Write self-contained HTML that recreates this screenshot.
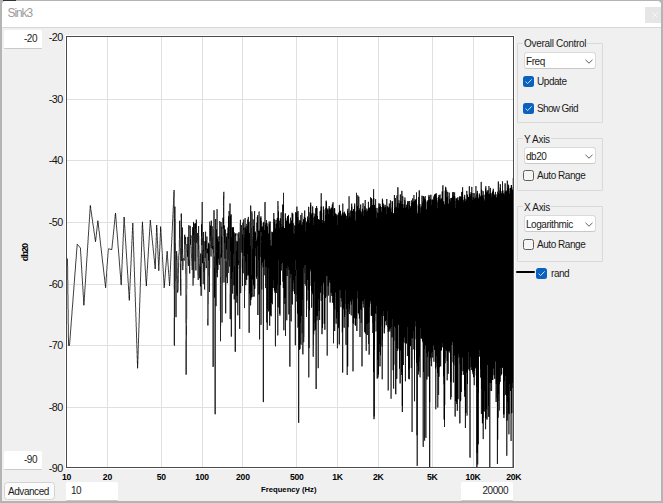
<!DOCTYPE html>
<html><head><meta charset="utf-8">
<style>
*{margin:0;padding:0;box-sizing:border-box}
html,body{width:663px;height:503px;overflow:hidden;background:#b4b4b4;font-family:"Liberation Sans",sans-serif}
.a{position:absolute;white-space:nowrap}
#win{position:absolute;left:2px;top:1px;width:659px;height:500px;background:#f0f0f0;border-radius:4px 4px 0 0;overflow:hidden}
#title{position:absolute;left:0;top:0;width:659px;height:27px;background:#fff;border-bottom:1px solid #d6d6d6}
.inp{position:absolute;background:#fff;border-bottom:1px solid #c9c9c9;border-radius:2px 2px 1px 1px}
.t{position:absolute;white-space:nowrap;font-size:10px;line-height:11px;color:#1b1b1b;letter-spacing:-0.45px}
.yl{position:absolute;white-space:nowrap;font-size:10.8px;line-height:12px;color:#111;text-align:right;width:30px;letter-spacing:-0.5px}
.xl{position:absolute;white-space:nowrap;font-size:8.6px;font-weight:bold;line-height:10px;color:#000;text-align:center;width:40px;letter-spacing:-0.25px}
.grp{position:absolute;border:1px solid #d9d9d9;border-radius:1px}
.gt{position:absolute;white-space:nowrap;font-size:10px;line-height:11px;color:#1b1b1b;background:#f0f0f0;padding:0 1px;letter-spacing:-0.3px}
.combo{position:absolute;background:#fff;border:1px solid #dadada;border-bottom-color:#c8c8c8;border-radius:3px}
.cb{position:absolute;width:11px;height:11px;border-radius:2.5px}
.cb.on{background:#0a62c0}
.cb.off{background:#f6f6f6;border:1px solid #5e5e5e}
</style></head><body>
<div class="a" style="left:3px;top:0;width:13px;height:1px;background:#333"></div>
<div id="win">
 <div id="title"><div class="t" style="left:5.5px;top:5px;font-size:11.9px;line-height:14px;letter-spacing:-1.05px;color:#9c9c9c">Sink3</div><div class="a" style="left:643px;top:6px;width:16px;height:16px;background:#e6e6e6"></div><svg class="a" style="left:650px;top:11px" width="6" height="6" viewBox="0 0 6 6"><path d="M0.5 0.5L5.5 5.5M5.5 0.5L0.5 5.5" stroke="#f4f4f4" stroke-width="1"/></svg></div>
</div>
<!-- left inputs -->
<div class="inp" style="left:4px;top:30px;width:38px;height:19px"></div>
<div class="t" style="left:7px;top:33px;width:30px;text-align:right">-20</div>
<div class="inp" style="left:4px;top:451px;width:38px;height:19px"></div>
<div class="t" style="left:7px;top:454px;width:30px;text-align:right">-90</div>
<div class="a" style="left:13.5px;top:246.5px;width:22px;height:11px;font-size:9px;font-weight:bold;line-height:11px;transform:rotate(-90deg);text-align:center;color:#000;letter-spacing:-0.9px">db20</div>
<!-- y labels -->
<div class="yl" style="left:32.8px;top:31.2px">-20</div>
<div class="yl" style="left:32.8px;top:92.8px">-30</div>
<div class="yl" style="left:32.8px;top:154.4px">-40</div>
<div class="yl" style="left:32.8px;top:216.0px">-50</div>
<div class="yl" style="left:32.8px;top:277.6px">-60</div>
<div class="yl" style="left:32.8px;top:339.2px">-70</div>
<div class="yl" style="left:32.8px;top:400.8px">-80</div>
<div class="yl" style="left:32.8px;top:462.4px">-90</div>
<!-- plot -->
<svg class="a" style="left:0;top:0" width="663" height="503" viewBox="0 0 663 503" shape-rendering="crispEdges">
 <rect x="65" y="35" width="450" height="434" fill="#fff"/>
 <path fill="#e0e0e0" d="M107 37h1v430h-1zM161 37h1v430h-1zM202 37h1v430h-1zM242 37h1v430h-1zM296 37h1v430h-1zM337 37h1v430h-1zM378 37h1v430h-1zM432 37h1v430h-1zM473 37h1v430h-1zM67 99h446v1h-446zM67 160h446v1h-446zM67 222h446v1h-446zM67 284h446v1h-446zM67 345h446v1h-446zM67 407h446v1h-446z"/>
<path fill="#dfdfdf" d="M67 324h1v14h-1zM68 266h1v14h-1zM69 333h1v3h-1zM70 320h1v2h-1zM70 342h1v2h-1zM71 307h1v2h-1zM71 329h1v2h-1zM72 294h1v2h-1zM72 316h1v2h-1zM73 281h1v2h-1zM73 303h1v2h-1zM74 268h1v2h-1zM74 290h1v2h-1zM75 254h1v3h-1zM75 276h1v3h-1zM76 263h1v2h-1zM77 250h1v2h-1zM80 262h1v3h-1zM81 251h1v3h-1zM81 278h1v3h-1zM82 267h1v3h-1zM82 295h1v2h-1zM83 284h1v2h-1zM84 282h1v2h-1zM84 305h1v1h-1zM85 266h1v3h-1zM85 292h1v3h-1zM86 250h1v3h-1zM86 276h1v3h-1zM87 235h1v2h-1zM87 261h1v2h-1zM88 219h1v3h-1zM88 245h1v3h-1zM89 205h1v1h-1zM89 230h1v2h-1zM90 214h1v3h-1zM91 207h1v2h-1zM91 219h1v1h-1zM92 214h1v2h-1zM92 226h1v1h-1zM93 221h1v2h-1zM93 233h1v1h-1zM94 228h1v1h-1zM94 240h1v1h-1zM95 234h1v1h-1zM96 225h1v1h-1zM96 240h1v1h-1zM97 231h1v1h-1zM98 220h1v1h-1zM98 232h1v2h-1zM99 227h1v1h-1zM99 241h1v2h-1zM100 235h1v2h-1zM100 250h1v1h-1zM101 244h1v2h-1zM101 259h1v1h-1zM102 253h1v1h-1zM102 267h1v2h-1zM103 262h1v1h-1zM103 276h1v1h-1zM104 270h1v2h-1zM104 285h1v1h-1zM105 276h1v2h-1zM106 262h1v2h-1zM106 286h1v2h-1zM107 249h1v1h-1zM107 271h1v3h-1zM108 257h1v2h-1zM110 248h1v1h-1zM111 243h1v2h-1zM112 234h1v1h-1zM112 249h1v1h-1zM113 224h1v1h-1zM113 240h1v2h-1zM114 214h1v1h-1zM114 230h1v2h-1zM115 223h1v2h-1zM116 214h1v2h-1zM116 235h1v2h-1zM117 227h1v2h-1zM117 248h1v2h-1zM118 239h1v2h-1zM118 260h1v3h-1zM119 252h1v2h-1zM119 273h1v2h-1zM120 265h1v2h-1zM121 257h1v3h-1zM121 285h1v1h-1zM122 233h1v4h-1zM122 272h1v4h-1zM123 249h1v4h-1zM124 235h1v3h-1zM125 225h1v2h-1zM125 251h1v3h-1zM126 241h1v2h-1zM126 267h1v3h-1zM127 257h1v2h-1zM127 283h1v3h-1zM128 273h1v2h-1zM128 300h1v1h-1zM129 276h1v3h-1zM130 253h1v4h-1zM130 290h1v4h-1zM131 231h1v4h-1zM131 268h1v4h-1zM132 222h1v1h-1zM132 246h1v4h-1zM133 267h1v5h-1zM134 247h1v5h-1zM134 297h1v5h-1zM135 277h1v5h-1zM135 327h1v5h-1zM136 307h1v5h-1zM136 358h1v5h-1zM137 338h1v4h-1zM138 313h1v5h-1zM138 364h1v4h-1zM139 282h1v5h-1zM139 333h1v5h-1zM140 252h1v5h-1zM140 303h1v5h-1zM141 222h1v4h-1zM141 272h1v5h-1zM142 242h1v5h-1zM143 225h1v3h-1zM143 252h1v3h-1zM144 241h1v3h-1zM144 269h1v2h-1zM145 258h1v2h-1zM146 268h1v2h-1zM147 251h1v3h-1zM147 279h1v2h-1zM148 235h1v2h-1zM148 262h1v3h-1zM149 246h1v2h-1zM150 231h1v1h-1zM151 223h1v2h-1zM151 240h1v1h-1zM152 233h1v2h-1zM152 250h1v1h-1zM153 243h1v2h-1zM153 259h1v2h-1zM154 253h1v1h-1zM155 233h1v5h-1zM156 253h1v5h-1zM157 259h1v3h-1zM158 244h1v4h-1zM159 233h1v4h-1zM160 249h1v3h-1zM161 226h1v1h-1zM161 254h1v3h-1zM162 242h1v3h-1zM162 271h1v3h-1zM163 259h1v3h-1zM164 272h1v3h-1zM165 260h1v2h-1zM165 281h1v2h-1zM166 268h1v2h-1zM167 267h1v3h-1zM168 258h1v2h-1zM168 281h1v2h-1zM169 269h1v2h-1zM170 247h1v4h-1zM170 283h1v3h-1zM171 226h1v4h-1zM171 261h1v4h-1zM172 205h1v3h-1zM172 240h1v4h-1zM173 289h1v29h-1zM173 345h1v1h-1zM175 317h1v1h-1zM176 317h1v1h-1zM177 251h1v3h-1zM178 240h1v10h-1zM178 292h1v1h-1zM179 260h1v7h-1zM180 213h1v1h-1zM182 270h1v1h-1zM183 249h1v6h-1zM185 234h1v1h-1zM186 237h1v7h-1zM187 236h1v1h-1zM187 289h1v30h-1zM190 225h1v1h-1zM190 266h1v1h-1zM190 273h1v1h-1zM193 221h1v1h-1zM195 219h1v1h-1zM199 226h1v10h-1zM199 279h1v7h-1zM200 239h1v14h-1zM202 284h1v1h-1zM204 232h1v9h-1zM205 270h1v20h-1zM206 232h1v4h-1zM206 268h1v1h-1zM210 220h1v1h-1zM210 257h1v11h-1zM214 414h1v1h-1zM216 306h1v1h-1zM219 265h1v46h-1zM221 323h1v3h-1zM223 191h1v1h-1zM224 191h1v1h-1zM226 313h1v1h-1zM227 283h1v1h-1zM230 336h1v1h-1zM233 299h1v1h-1zM238 315h1v1h-1zM239 220h1v3h-1zM242 286h1v1h-1zM244 308h1v1h-1zM245 286h1v5h-1zM246 223h1v1h-1zM246 285h1v1h-1zM248 216h1v1h-1zM251 205h1v1h-1zM251 300h1v5h-1zM252 297h1v1h-1zM255 211h1v20h-1zM260 325h1v14h-1zM263 221h1v1h-1zM263 402h1v1h-1zM265 288h1v1h-1zM272 231h1v1h-1zM273 288h1v3h-1zM274 293h1v53h-1zM275 219h1v1h-1zM278 335h1v1h-1zM284 213h1v1h-1zM284 330h1v1h-1zM287 320h1v1h-1zM288 214h1v1h-1zM289 219h1v3h-1zM291 212h1v1h-1zM293 213h1v1h-1zM294 223h1v2h-1zM294 345h1v1h-1zM300 349h1v1h-1zM301 212h1v1h-1zM303 216h1v1h-1zM305 210h1v1h-1zM307 301h1v8h-1zM309 377h1v1h-1zM311 202h1v1h-1zM313 206h1v1h-1zM314 334h1v1h-1zM317 206h1v2h-1zM317 368h1v1h-1zM318 368h1v1h-1zM320 301h1v19h-1zM321 334h1v1h-1zM322 206h1v1h-1zM322 334h1v1h-1zM325 200h1v1h-1zM330 207h1v1h-1zM331 204h1v1h-1zM331 296h1v7h-1zM335 208h1v1h-1zM336 213h1v1h-1zM336 324h1v24h-1zM338 205h1v7h-1zM338 344h1v1h-1zM339 204h1v1h-1zM340 307h1v1h-1zM341 213h1v1h-1zM341 332h1v1h-1zM343 203h1v1h-1zM343 372h1v1h-1zM347 208h1v1h-1zM348 366h1v1h-1zM350 315h1v1h-1zM352 203h1v1h-1zM355 203h1v1h-1zM358 315h1v4h-1zM359 196h1v1h-1zM361 204h1v1h-1zM367 202h1v6h-1zM373 419h1v1h-1zM374 189h1v9h-1zM374 419h1v1h-1zM376 199h1v8h-1zM380 203h1v1h-1zM381 199h1v8h-1zM381 379h1v1h-1zM383 200h1v3h-1zM383 333h1v1h-1zM385 204h1v1h-1zM385 326h1v3h-1zM388 203h1v1h-1zM389 200h1v3h-1zM392 370h1v1h-1zM393 195h1v18h-1zM394 365h1v24h-1zM396 394h1v1h-1zM398 350h1v1h-1zM399 194h1v1h-1zM401 190h1v1h-1zM402 190h1v1h-1zM404 344h1v37h-1zM406 344h1v12h-1zM408 379h1v1h-1zM419 377h1v1h-1zM425 438h1v3h-1zM426 200h1v1h-1zM428 194h1v1h-1zM431 194h1v1h-1zM433 195h1v1h-1zM436 409h1v1h-1zM437 197h1v1h-1zM439 377h1v18h-1zM441 366h1v1h-1zM444 190h1v1h-1zM446 380h1v1h-1zM447 190h1v1h-1zM451 197h1v1h-1zM451 399h1v1h-1zM452 363h1v20h-1zM455 192h1v4h-1zM458 399h1v1h-1zM460 423h1v1h-1zM461 191h1v1h-1zM461 400h1v1h-1zM463 187h1v10h-1zM464 194h1v1h-1zM464 397h1v31h-1zM466 190h1v1h-1zM468 186h1v1h-1zM468 370h1v1h-1zM471 186h1v1h-1zM472 374h1v1h-1zM473 385h1v1h-1zM475 375h1v1h-1zM477 190h1v1h-1zM478 193h1v1h-1zM478 464h1v1h-1zM480 378h1v36h-1zM481 181h1v1h-1zM481 414h1v9h-1zM483 439h1v1h-1zM486 420h1v9h-1zM490 187h1v1h-1zM491 192h1v1h-1zM492 188h1v1h-1zM492 380h1v11h-1zM494 192h1v2h-1zM495 191h1v1h-1zM496 402h1v62h-1zM497 181h1v1h-1zM498 439h1v1h-1zM506 180h1v1h-1zM509 185h1v3h-1zM509 434h1v1h-1z"/>
<path fill="#bfbfbf" d="M67 309h1v15h-1zM68 280h1v15h-1zM69 336h1v2h-1zM70 322h1v3h-1zM70 340h1v2h-1zM71 309h1v2h-1zM71 327h1v2h-1zM72 296h1v2h-1zM72 314h1v2h-1zM73 283h1v2h-1zM73 301h1v2h-1zM74 270h1v2h-1zM74 287h1v3h-1zM75 257h1v2h-1zM75 274h1v2h-1zM76 244h1v2h-1zM76 261h1v2h-1zM77 248h1v2h-1zM78 246h1v1h-1zM80 259h1v3h-1zM81 254h1v2h-1zM81 276h1v2h-1zM82 270h1v3h-1zM82 292h1v3h-1zM83 286h1v3h-1zM83 305h1v1h-1zM84 284h1v3h-1zM85 269h1v2h-1zM85 289h1v3h-1zM86 253h1v3h-1zM86 274h1v2h-1zM87 237h1v3h-1zM87 258h1v3h-1zM88 222h1v2h-1zM88 243h1v2h-1zM89 206h1v3h-1zM89 227h1v3h-1zM90 213h1v1h-1zM91 209h1v1h-1zM91 218h1v1h-1zM92 216h1v1h-1zM92 225h1v1h-1zM93 223h1v1h-1zM93 232h1v1h-1zM94 229h1v2h-1zM94 239h1v1h-1zM95 235h1v1h-1zM96 226h1v2h-1zM96 238h1v2h-1zM97 220h1v1h-1zM97 229h1v2h-1zM98 231h1v1h-1zM99 228h1v2h-1zM99 240h1v1h-1zM100 237h1v1h-1zM100 248h1v2h-1zM101 246h1v1h-1zM101 257h1v2h-1zM102 254h1v2h-1zM102 266h1v1h-1zM103 263h1v1h-1zM103 275h1v1h-1zM104 272h1v1h-1zM104 283h1v2h-1zM105 278h1v1h-1zM106 264h1v2h-1zM106 283h1v3h-1zM107 250h1v2h-1zM107 269h1v2h-1zM108 254h1v3h-1zM111 245h1v2h-1zM112 235h1v2h-1zM112 248h1v1h-1zM113 225h1v2h-1zM113 239h1v1h-1zM114 215h1v2h-1zM114 229h1v1h-1zM115 222h1v1h-1zM116 216h1v2h-1zM116 233h1v2h-1zM117 229h1v2h-1zM117 246h1v2h-1zM118 241h1v3h-1zM118 258h1v2h-1zM119 254h1v2h-1zM119 271h1v2h-1zM120 267h1v2h-1zM121 260h1v4h-1zM122 237h1v4h-1zM122 268h1v4h-1zM123 245h1v4h-1zM124 233h1v2h-1zM125 227h1v3h-1zM125 249h1v2h-1zM126 243h1v3h-1zM126 265h1v2h-1zM127 259h1v3h-1zM127 281h1v2h-1zM128 275h1v3h-1zM128 298h1v2h-1zM129 279h1v4h-1zM130 257h1v4h-1zM130 287h1v3h-1zM131 235h1v4h-1zM131 265h1v3h-1zM132 243h1v3h-1zM133 262h1v5h-1zM134 252h1v5h-1zM134 292h1v5h-1zM135 282h1v5h-1zM135 322h1v5h-1zM136 312h1v5h-1zM136 353h1v5h-1zM137 342h1v3h-1zM138 318h1v5h-1zM138 359h1v5h-1zM139 287h1v6h-1zM139 328h1v5h-1zM140 257h1v5h-1zM140 298h1v5h-1zM141 226h1v5h-1zM141 267h1v5h-1zM142 221h1v1h-1zM142 238h1v4h-1zM143 228h1v2h-1zM143 250h1v2h-1zM144 244h1v3h-1zM144 266h1v3h-1zM145 260h1v3h-1zM145 282h1v4h-1zM146 270h1v3h-1zM147 254h1v3h-1zM147 276h1v3h-1zM148 237h1v3h-1zM148 259h1v3h-1zM149 220h1v4h-1zM149 243h1v3h-1zM150 230h1v1h-1zM151 225h1v1h-1zM151 238h1v2h-1zM152 235h1v1h-1zM152 248h1v2h-1zM153 245h1v1h-1zM153 258h1v1h-1zM154 254h1v2h-1zM155 238h1v5h-1zM156 248h1v5h-1zM157 225h1v3h-1zM157 255h1v4h-1zM158 248h1v3h-1zM159 237h1v4h-1zM159 270h1v1h-1zM160 245h1v4h-1zM161 227h1v2h-1zM161 251h1v3h-1zM162 245h1v3h-1zM162 268h1v3h-1zM163 262h1v3h-1zM164 275h1v1h-1zM165 262h1v2h-1zM165 279h1v2h-1zM166 266h1v2h-1zM167 265h1v2h-1zM168 260h1v3h-1zM168 279h1v2h-1zM169 271h1v2h-1zM170 251h1v3h-1zM170 279h1v4h-1zM171 230h1v3h-1zM171 258h1v3h-1zM172 208h1v4h-1zM172 237h1v3h-1zM173 222h1v67h-1zM173 318h1v27h-1zM175 206h1v1h-1zM177 254h1v2h-1zM178 250h1v3h-1zM178 291h1v1h-1zM179 220h1v1h-1zM179 255h1v5h-1zM180 217h1v3h-1zM181 270h1v9h-1zM181 295h1v1h-1zM183 255h1v3h-1zM184 234h1v1h-1zM185 235h1v1h-1zM187 266h1v23h-1zM190 254h1v12h-1zM190 267h1v6h-1zM195 220h1v3h-1zM196 270h1v1h-1zM199 236h1v9h-1zM203 284h1v1h-1zM205 268h1v2h-1zM207 236h1v1h-1zM208 242h1v1h-1zM208 325h1v1h-1zM215 414h1v1h-1zM217 277h1v1h-1zM220 221h1v1h-1zM220 341h1v1h-1zM222 217h1v1h-1zM224 199h1v26h-1zM226 284h1v29h-1zM229 267h1v27h-1zM230 320h1v16h-1zM233 294h1v1h-1zM234 351h1v1h-1zM236 236h1v4h-1zM237 315h1v1h-1zM239 223h1v9h-1zM240 219h1v1h-1zM240 294h1v35h-1zM241 268h1v25h-1zM243 273h1v1h-1zM245 285h1v1h-1zM247 217h1v2h-1zM247 276h1v4h-1zM249 221h1v1h-1zM251 206h1v5h-1zM252 211h1v1h-1zM255 288h1v1h-1zM256 217h1v5h-1zM258 211h1v1h-1zM262 290h1v112h-1zM264 275h1v1h-1zM268 221h1v1h-1zM270 317h1v9h-1zM271 231h1v1h-1zM271 316h1v1h-1zM272 304h1v1h-1zM276 218h1v1h-1zM279 218h1v2h-1zM280 212h1v1h-1zM282 282h1v6h-1zM283 192h1v1h-1zM283 330h1v1h-1zM284 214h1v14h-1zM286 320h1v1h-1zM289 222h1v1h-1zM292 212h1v1h-1zM293 291h1v1h-1zM294 294h1v51h-1zM297 206h1v1h-1zM299 350h1v73h-1zM302 354h1v1h-1zM303 217h1v2h-1zM303 354h1v1h-1zM304 337h1v5h-1zM305 211h1v6h-1zM308 206h1v1h-1zM309 207h1v5h-1zM311 203h1v2h-1zM312 356h1v1h-1zM313 207h1v5h-1zM314 213h1v1h-1zM314 331h1v3h-1zM320 193h1v1h-1zM322 207h1v6h-1zM324 209h1v1h-1zM326 355h1v1h-1zM329 302h1v1h-1zM331 205h1v2h-1zM335 209h1v4h-1zM335 324h1v7h-1zM341 308h1v24h-1zM343 328h1v44h-1zM346 215h1v1h-1zM348 328h1v38h-1zM352 204h1v2h-1zM352 371h1v1h-1zM353 371h1v1h-1zM355 204h1v7h-1zM356 192h1v1h-1zM358 195h1v1h-1zM361 205h1v4h-1zM361 366h1v1h-1zM362 366h1v1h-1zM364 332h1v1h-1zM365 350h1v1h-1zM367 208h1v1h-1zM368 201h1v1h-1zM370 315h1v1h-1zM375 331h1v1h-1zM376 207h1v1h-1zM376 378h1v1h-1zM379 366h1v1h-1zM380 366h1v1h-1zM382 379h1v1h-1zM384 204h1v1h-1zM385 325h1v1h-1zM386 325h1v1h-1zM387 390h1v1h-1zM388 204h1v2h-1zM395 394h1v1h-1zM397 378h1v1h-1zM398 349h1v1h-1zM399 195h1v5h-1zM399 383h1v1h-1zM401 406h1v6h-1zM403 196h1v1h-1zM404 343h1v1h-1zM405 197h1v1h-1zM406 204h1v1h-1zM409 379h1v1h-1zM410 201h1v5h-1zM410 347h1v21h-1zM413 349h1v1h-1zM415 340h1v10h-1zM417 204h1v1h-1zM418 190h1v1h-1zM420 377h1v1h-1zM421 195h1v1h-1zM422 195h1v1h-1zM422 446h1v1h-1zM427 379h1v1h-1zM430 194h1v1h-1zM430 402h1v65h-1zM431 366h1v1h-1zM435 409h1v1h-1zM438 407h1v1h-1zM439 194h1v1h-1zM441 191h1v1h-1zM441 351h1v15h-1zM443 419h1v1h-1zM445 186h1v1h-1zM445 364h1v41h-1zM446 187h1v1h-1zM447 191h1v1h-1zM447 380h1v1h-1zM451 397h1v2h-1zM452 362h1v1h-1zM454 416h1v1h-1zM455 196h1v1h-1zM456 404h1v7h-1zM461 392h1v8h-1zM462 372h1v3h-1zM465 195h1v3h-1zM468 187h1v10h-1zM474 385h1v1h-1zM475 369h1v6h-1zM478 194h1v1h-1zM478 445h1v19h-1zM482 190h1v1h-1zM484 194h1v1h-1zM485 429h1v1h-1zM492 189h1v1h-1zM493 188h1v1h-1zM497 182h1v9h-1zM498 418h1v21h-1zM499 184h1v3h-1zM501 375h1v1h-1zM502 368h1v6h-1zM503 190h1v1h-1zM506 181h1v9h-1zM507 455h1v1h-1zM508 434h1v1h-1zM510 185h1v2h-1zM512 178h1v9h-1z"/>
<path fill="#9f9f9f" d="M67 258h1v1h-1zM67 295h1v14h-1zM68 295h1v14h-1zM69 338h1v2h-1zM70 325h1v2h-1zM70 338h1v2h-1zM71 311h1v3h-1zM71 325h1v2h-1zM72 298h1v3h-1zM72 311h1v3h-1zM73 285h1v2h-1zM73 298h1v3h-1zM74 272h1v2h-1zM74 285h1v2h-1zM75 259h1v2h-1zM75 272h1v2h-1zM76 246h1v2h-1zM76 259h1v2h-1zM77 246h1v2h-1zM79 247h1v1h-1zM80 247h1v1h-1zM80 256h1v3h-1zM81 256h1v3h-1zM81 273h1v3h-1zM82 273h1v3h-1zM82 289h1v3h-1zM83 289h1v3h-1zM84 287h1v2h-1zM85 271h1v3h-1zM85 287h1v2h-1zM86 256h1v2h-1zM86 271h1v3h-1zM87 240h1v3h-1zM87 256h1v2h-1zM88 224h1v3h-1zM88 240h1v3h-1zM89 209h1v2h-1zM89 224h1v3h-1zM90 212h1v1h-1zM91 210h1v1h-1zM91 217h1v1h-1zM92 217h1v1h-1zM92 224h1v1h-1zM93 224h1v1h-1zM93 231h1v1h-1zM94 231h1v1h-1zM94 238h1v1h-1zM95 236h1v1h-1zM96 228h1v1h-1zM96 237h1v1h-1zM97 228h1v1h-1zM98 230h1v1h-1zM99 230h1v1h-1zM99 238h1v2h-1zM100 238h1v2h-1zM100 247h1v1h-1zM101 247h1v1h-1zM101 256h1v1h-1zM102 256h1v1h-1zM102 264h1v2h-1zM103 264h1v2h-1zM103 273h1v2h-1zM104 273h1v2h-1zM104 282h1v1h-1zM105 279h1v2h-1zM106 266h1v3h-1zM106 281h1v2h-1zM107 252h1v2h-1zM107 266h1v3h-1zM108 248h1v1h-1zM108 252h1v2h-1zM109 248h1v2h-1zM111 247h1v1h-1zM112 237h1v2h-1zM112 247h1v1h-1zM113 227h1v2h-1zM113 237h1v2h-1zM114 217h1v2h-1zM114 227h1v2h-1zM115 220h1v2h-1zM116 218h1v2h-1zM116 231h1v2h-1zM117 231h1v2h-1zM117 244h1v2h-1zM118 244h1v2h-1zM118 256h1v2h-1zM119 256h1v2h-1zM119 269h1v2h-1zM120 269h1v2h-1zM120 284h1v1h-1zM121 264h1v4h-1zM122 241h1v4h-1zM122 264h1v4h-1zM123 241h1v4h-1zM124 230h1v3h-1zM125 230h1v3h-1zM125 246h1v3h-1zM126 246h1v3h-1zM126 262h1v3h-1zM127 262h1v3h-1zM127 278h1v3h-1zM128 278h1v3h-1zM128 294h1v4h-1zM129 283h1v4h-1zM129 300h1v1h-1zM130 261h1v4h-1zM130 283h1v4h-1zM131 239h1v3h-1zM131 261h1v4h-1zM132 240h1v3h-1zM133 223h1v8h-1zM133 257h1v5h-1zM134 257h1v5h-1zM134 287h1v5h-1zM135 287h1v5h-1zM135 317h1v5h-1zM136 317h1v5h-1zM136 348h1v5h-1zM137 345h1v3h-1zM137 368h1v1h-1zM138 323h1v5h-1zM138 354h1v5h-1zM139 293h1v5h-1zM139 323h1v5h-1zM140 262h1v5h-1zM140 293h1v5h-1zM141 231h1v6h-1zM141 262h1v5h-1zM142 236h1v2h-1zM143 230h1v3h-1zM143 247h1v3h-1zM144 247h1v3h-1zM144 263h1v3h-1zM145 263h1v3h-1zM145 280h1v2h-1zM146 273h1v2h-1zM147 257h1v2h-1zM147 273h1v3h-1zM148 240h1v3h-1zM148 257h1v2h-1zM149 224h1v3h-1zM149 240h1v3h-1zM150 228h1v2h-1zM151 226h1v2h-1zM151 236h1v2h-1zM152 236h1v2h-1zM152 246h1v2h-1zM153 246h1v2h-1zM153 256h1v2h-1zM154 256h1v2h-1zM154 268h1v1h-1zM155 243h1v5h-1zM156 243h1v5h-1zM157 228h1v5h-1zM157 251h1v4h-1zM158 251h1v4h-1zM159 241h1v4h-1zM159 264h1v6h-1zM160 241h1v4h-1zM161 229h1v4h-1zM161 248h1v3h-1zM162 248h1v3h-1zM162 265h1v3h-1zM163 265h1v3h-1zM163 283h1v5h-1zM164 276h1v2h-1zM165 264h1v2h-1zM165 277h1v2h-1zM166 251h1v1h-1zM166 264h1v2h-1zM167 263h1v2h-1zM168 263h1v2h-1zM168 276h1v3h-1zM169 273h1v2h-1zM170 254h1v4h-1zM170 276h1v3h-1zM171 233h1v4h-1zM171 254h1v4h-1zM172 212h1v3h-1zM172 233h1v4h-1zM173 218h1v4h-1zM177 256h1v3h-1zM178 253h1v1h-1zM178 290h1v1h-1zM179 254h1v1h-1zM180 214h1v3h-1zM180 220h1v1h-1zM181 261h1v9h-1zM181 279h1v16h-1zM183 266h1v4h-1zM185 236h1v1h-1zM185 323h1v17h-1zM185 374h1v1h-1zM187 264h1v2h-1zM189 225h1v1h-1zM190 248h1v6h-1zM191 235h1v1h-1zM191 266h1v4h-1zM192 285h1v1h-1zM193 285h1v1h-1zM195 270h1v1h-1zM196 219h1v1h-1zM197 275h1v5h-1zM199 245h1v6h-1zM199 278h1v1h-1zM200 295h1v1h-1zM201 202h1v18h-1zM202 264h1v20h-1zM205 231h1v1h-1zM207 240h1v1h-1zM207 325h1v1h-1zM209 221h1v1h-1zM210 221h1v1h-1zM210 256h1v1h-1zM211 220h1v1h-1zM211 256h1v1h-1zM221 322h1v1h-1zM222 322h1v1h-1zM223 282h1v1h-1zM224 192h1v7h-1zM224 282h1v1h-1zM225 313h1v1h-1zM226 233h1v1h-1zM226 283h1v1h-1zM227 227h1v1h-1zM229 203h1v1h-1zM229 294h1v25h-1zM230 203h1v1h-1zM230 319h1v1h-1zM233 286h1v8h-1zM233 295h1v4h-1zM234 300h1v51h-1zM236 233h1v1h-1zM236 235h1v1h-1zM236 240h1v1h-1zM237 233h1v1h-1zM238 269h1v46h-1zM240 293h1v1h-1zM241 253h1v15h-1zM242 222h1v1h-1zM246 280h1v5h-1zM248 332h1v1h-1zM255 277h1v11h-1zM259 211h1v1h-1zM261 216h1v1h-1zM262 223h1v3h-1zM262 289h1v1h-1zM266 323h1v7h-1zM270 221h1v1h-1zM270 316h1v1h-1zM274 213h1v6h-1zM275 346h1v1h-1zM276 219h1v1h-1zM277 335h1v1h-1zM278 308h1v27h-1zM280 315h1v1h-1zM286 218h1v2h-1zM287 276h1v44h-1zM288 314h1v1h-1zM290 217h1v1h-1zM290 366h1v1h-1zM291 321h1v1h-1zM293 214h1v9h-1zM295 345h1v1h-1zM296 206h1v1h-1zM304 284h1v53h-1zM307 300h1v1h-1zM308 377h1v1h-1zM309 348h1v29h-1zM310 202h1v1h-1zM310 285h1v1h-1zM311 205h1v8h-1zM312 307h1v49h-1zM313 212h1v1h-1zM317 321h1v47h-1zM319 211h1v1h-1zM320 194h1v12h-1zM320 300h1v1h-1zM322 213h1v7h-1zM323 295h1v29h-1zM325 329h1v1h-1zM326 200h1v1h-1zM326 297h1v58h-1zM327 208h1v1h-1zM328 206h1v2h-1zM330 302h1v1h-1zM333 343h1v1h-1zM337 214h1v1h-1zM337 348h1v1h-1zM338 329h1v15h-1zM340 210h1v1h-1zM341 307h1v1h-1zM342 203h1v1h-1zM343 204h1v8h-1zM344 211h1v1h-1zM345 213h1v1h-1zM346 345h1v30h-1zM348 196h1v1h-1zM348 327h1v1h-1zM350 314h1v1h-1zM351 203h1v1h-1zM351 315h1v1h-1zM352 206h1v1h-1zM354 319h1v6h-1zM358 314h1v1h-1zM359 197h1v11h-1zM361 209h1v2h-1zM364 200h1v6h-1zM365 334h1v16h-1zM368 354h1v1h-1zM370 304h1v11h-1zM372 199h1v1h-1zM374 198h1v6h-1zM376 332h1v46h-1zM378 377h1v1h-1zM381 347h1v32h-1zM382 198h1v1h-1zM383 316h1v17h-1zM384 333h1v1h-1zM387 199h1v7h-1zM387 332h1v58h-1zM388 206h1v1h-1zM388 390h1v1h-1zM390 398h1v1h-1zM391 201h1v1h-1zM394 364h1v1h-1zM396 195h1v1h-1zM396 379h1v15h-1zM397 351h1v27h-1zM398 187h1v1h-1zM400 383h1v1h-1zM401 375h1v31h-1zM403 197h1v7h-1zM404 197h1v1h-1zM405 381h1v1h-1zM410 346h1v1h-1zM414 401h1v1h-1zM415 339h1v1h-1zM416 436h1v30h-1zM417 205h1v1h-1zM418 191h1v6h-1zM422 343h1v103h-1zM424 196h1v1h-1zM426 201h1v1h-1zM430 366h1v36h-1zM434 361h1v1h-1zM435 193h1v1h-1zM436 369h1v40h-1zM437 198h1v2h-1zM438 395h1v12h-1zM440 194h1v1h-1zM440 366h1v1h-1zM441 192h1v6h-1zM442 347h1v1h-1zM443 185h1v1h-1zM444 191h1v10h-1zM445 363h1v1h-1zM446 361h1v19h-1zM448 192h1v1h-1zM449 192h1v1h-1zM455 197h1v1h-1zM458 197h1v1h-1zM459 423h1v1h-1zM462 371h1v1h-1zM463 197h1v2h-1zM465 198h1v1h-1zM466 415h1v1h-1zM467 191h1v3h-1zM467 415h1v1h-1zM469 457h1v1h-1zM472 187h1v6h-1zM473 378h1v7h-1zM478 195h1v2h-1zM480 182h1v13h-1zM482 424h1v15h-1zM486 186h1v2h-1zM487 419h1v1h-1zM490 391h1v76h-1zM493 376h1v4h-1zM499 187h1v1h-1zM504 183h1v1h-1zM507 180h1v1h-1zM507 421h1v34h-1zM508 184h1v1h-1zM510 187h1v1h-1zM512 413h1v54h-1z"/>
<path fill="#808080" d="M67 280h1v15h-1zM68 309h1v15h-1zM69 340h1v2h-1zM70 327h1v2h-1zM70 336h1v2h-1zM71 314h1v2h-1zM71 322h1v3h-1zM72 301h1v2h-1zM72 309h1v2h-1zM73 287h1v3h-1zM73 296h1v2h-1zM74 274h1v2h-1zM74 283h1v2h-1zM75 261h1v2h-1zM75 270h1v2h-1zM76 248h1v2h-1zM76 257h1v2h-1zM77 245h1v1h-1zM79 246h1v1h-1zM80 254h1v2h-1zM81 259h1v3h-1zM81 270h1v3h-1zM82 276h1v2h-1zM82 286h1v3h-1zM83 292h1v3h-1zM84 289h1v3h-1zM84 301h1v4h-1zM85 274h1v2h-1zM85 284h1v3h-1zM86 258h1v3h-1zM86 269h1v2h-1zM87 243h1v2h-1zM87 253h1v3h-1zM88 227h1v3h-1zM88 237h1v3h-1zM89 211h1v3h-1zM89 222h1v2h-1zM90 211h1v1h-1zM91 211h1v1h-1zM91 216h1v1h-1zM92 218h1v1h-1zM92 223h1v1h-1zM93 225h1v1h-1zM93 229h1v2h-1zM94 232h1v1h-1zM94 236h1v2h-1zM96 229h1v2h-1zM96 235h1v2h-1zM97 226h1v2h-1zM98 221h1v2h-1zM98 228h1v2h-1zM99 231h1v1h-1zM99 237h1v1h-1zM100 240h1v1h-1zM100 246h1v1h-1zM101 248h1v2h-1zM101 254h1v2h-1zM102 257h1v2h-1zM102 263h1v1h-1zM103 266h1v1h-1zM103 272h1v1h-1zM104 275h1v1h-1zM104 280h1v2h-1zM105 281h1v1h-1zM106 269h1v2h-1zM106 278h1v3h-1zM107 254h1v3h-1zM107 264h1v2h-1zM108 250h1v2h-1zM111 248h1v1h-1zM112 239h1v1h-1zM112 245h1v2h-1zM113 229h1v1h-1zM113 235h1v2h-1zM114 219h1v1h-1zM114 225h1v2h-1zM115 219h1v1h-1zM116 220h1v2h-1zM116 229h1v2h-1zM117 233h1v2h-1zM117 241h1v3h-1zM118 246h1v2h-1zM118 254h1v2h-1zM119 258h1v2h-1zM119 267h1v2h-1zM120 271h1v2h-1zM120 280h1v4h-1zM121 268h1v4h-1zM122 245h1v4h-1zM122 260h1v4h-1zM123 217h1v8h-1zM123 237h1v4h-1zM124 228h1v2h-1zM125 233h1v2h-1zM125 243h1v3h-1zM126 249h1v2h-1zM126 259h1v3h-1zM127 265h1v2h-1zM127 275h1v3h-1zM128 281h1v2h-1zM128 291h1v3h-1zM129 287h1v2h-1zM130 265h1v3h-1zM130 279h1v4h-1zM131 242h1v4h-1zM131 257h1v4h-1zM132 238h1v2h-1zM133 231h1v6h-1zM133 252h1v5h-1zM134 262h1v5h-1zM134 282h1v5h-1zM135 292h1v5h-1zM135 312h1v5h-1zM136 322h1v5h-1zM136 343h1v5h-1zM137 348h1v3h-1zM138 328h1v5h-1zM138 348h1v6h-1zM139 298h1v5h-1zM139 318h1v5h-1zM140 267h1v5h-1zM140 287h1v6h-1zM141 237h1v5h-1zM141 257h1v5h-1zM142 234h1v2h-1zM143 233h1v3h-1zM143 244h1v3h-1zM144 250h1v2h-1zM144 260h1v3h-1zM145 266h1v3h-1zM145 277h1v3h-1zM146 275h1v2h-1zM147 259h1v3h-1zM147 270h1v3h-1zM148 243h1v3h-1zM148 254h1v3h-1zM149 227h1v2h-1zM149 237h1v3h-1zM150 227h1v1h-1zM151 228h1v2h-1zM151 235h1v1h-1zM152 238h1v2h-1zM152 245h1v1h-1zM153 248h1v2h-1zM153 254h1v2h-1zM154 258h1v1h-1zM154 265h1v3h-1zM155 248h1v5h-1zM156 240h1v3h-1zM157 233h1v4h-1zM157 248h1v3h-1zM158 255h1v2h-1zM159 245h1v4h-1zM159 260h1v4h-1zM160 226h1v1h-1zM160 238h1v3h-1zM161 233h1v3h-1zM161 245h1v3h-1zM162 251h1v3h-1zM162 262h1v3h-1zM163 268h1v3h-1zM163 280h1v3h-1zM164 278h1v1h-1zM165 266h1v2h-1zM165 275h1v2h-1zM166 252h1v3h-1zM166 262h1v2h-1zM167 260h1v3h-1zM168 265h1v2h-1zM168 274h1v2h-1zM169 275h1v2h-1zM170 258h1v3h-1zM170 272h1v4h-1zM171 237h1v3h-1zM171 251h1v3h-1zM172 215h1v4h-1zM172 230h1v3h-1zM173 190h1v2h-1zM173 213h1v5h-1zM174 197h1v9h-1zM175 207h1v12h-1zM177 259h1v9h-1zM178 254h1v2h-1zM178 283h1v7h-1zM179 251h1v3h-1zM180 221h1v16h-1zM180 295h1v1h-1zM181 213h1v1h-1zM182 227h1v1h-1zM183 261h1v5h-1zM184 260h1v1h-1zM185 274h1v49h-1zM185 340h1v34h-1zM186 252h1v16h-1zM186 374h1v1h-1zM187 257h1v7h-1zM189 273h1v1h-1zM190 245h1v3h-1zM191 238h1v9h-1zM191 261h1v5h-1zM192 270h1v15h-1zM194 223h1v1h-1zM194 262h1v16h-1zM196 243h1v27h-1zM197 257h1v18h-1zM199 251h1v5h-1zM199 257h1v1h-1zM200 253h1v1h-1zM200 287h1v8h-1zM201 220h1v4h-1zM202 263h1v1h-1zM204 289h1v1h-1zM205 261h1v7h-1zM206 236h1v1h-1zM207 237h1v3h-1zM207 241h1v7h-1zM208 304h1v21h-1zM210 222h1v3h-1zM212 250h1v117h-1zM213 210h1v1h-1zM214 210h1v1h-1zM214 229h1v1h-1zM214 298h1v116h-1zM216 209h1v10h-1zM217 209h1v1h-1zM218 236h1v1h-1zM218 265h1v5h-1zM225 229h1v1h-1zM226 234h1v2h-1zM226 278h1v5h-1zM228 211h1v5h-1zM231 214h1v1h-1zM234 232h1v1h-1zM236 234h1v1h-1zM236 302h1v1h-1zM237 236h1v5h-1zM238 265h1v4h-1zM243 219h1v1h-1zM244 218h1v2h-1zM248 276h1v56h-1zM250 205h1v1h-1zM250 305h1v1h-1zM251 298h1v2h-1zM252 212h1v2h-1zM253 219h1v1h-1zM253 296h1v1h-1zM254 296h1v1h-1zM255 231h1v1h-1zM255 257h1v20h-1zM256 222h1v1h-1zM258 212h1v3h-1zM258 295h1v20h-1zM259 339h1v1h-1zM260 216h1v1h-1zM261 217h1v1h-1zM261 324h1v1h-1zM262 268h1v21h-1zM264 202h1v1h-1zM267 223h1v1h-1zM268 222h1v2h-1zM268 311h1v1h-1zM269 221h1v1h-1zM274 292h1v1h-1zM278 201h1v5h-1zM278 209h1v1h-1zM279 220h1v1h-1zM279 315h1v1h-1zM280 213h1v5h-1zM280 314h1v1h-1zM281 212h1v1h-1zM281 270h1v1h-1zM282 204h1v1h-1zM284 304h1v26h-1zM289 366h1v1h-1zM290 321h1v45h-1zM291 213h1v7h-1zM292 304h1v1h-1zM296 301h1v1h-1zM297 207h1v4h-1zM297 327h1v1h-1zM300 348h1v1h-1zM301 344h1v1h-1zM302 213h1v9h-1zM303 343h1v11h-1zM304 210h1v1h-1zM305 217h1v1h-1zM306 221h1v1h-1zM307 216h1v1h-1zM310 272h1v13h-1zM312 295h1v12h-1zM315 331h1v58h-1zM317 320h1v1h-1zM319 212h1v7h-1zM320 206h1v1h-1zM320 293h1v7h-1zM323 294h1v1h-1zM324 210h1v11h-1zM325 201h1v6h-1zM325 298h1v31h-1zM327 355h1v1h-1zM329 283h1v19h-1zM330 208h1v1h-1zM332 202h1v1h-1zM333 202h1v1h-1zM335 323h1v1h-1zM338 212h1v1h-1zM338 328h1v1h-1zM339 344h1v1h-1zM341 214h1v1h-1zM343 327h1v1h-1zM345 344h1v1h-1zM348 197h1v11h-1zM349 196h1v1h-1zM350 210h1v1h-1zM350 305h1v9h-1zM352 207h1v4h-1zM354 203h1v1h-1zM354 318h1v1h-1zM355 211h1v1h-1zM357 313h1v18h-1zM360 204h1v1h-1zM362 203h1v1h-1zM363 203h1v1h-1zM363 307h1v1h-1zM366 208h1v1h-1zM368 344h1v10h-1zM369 207h1v1h-1zM369 354h1v1h-1zM372 200h1v5h-1zM374 204h1v1h-1zM375 321h1v10h-1zM376 331h1v1h-1zM379 203h1v1h-1zM381 346h1v1h-1zM383 203h1v1h-1zM385 322h1v3h-1zM389 203h1v1h-1zM389 331h1v1h-1zM390 332h1v66h-1zM391 202h1v5h-1zM391 398h1v1h-1zM392 338h1v32h-1zM394 341h1v23h-1zM398 188h1v12h-1zM398 348h1v1h-1zM399 200h1v1h-1zM399 369h1v14h-1zM402 191h1v5h-1zM405 198h1v2h-1zM411 368h1v64h-1zM414 195h1v4h-1zM416 435h1v1h-1zM417 206h1v5h-1zM418 374h1v1h-1zM419 372h1v5h-1zM420 204h1v2h-1zM422 342h1v1h-1zM426 202h1v1h-1zM426 380h1v58h-1zM427 377h1v2h-1zM428 376h1v1h-1zM430 361h1v5h-1zM431 195h1v4h-1zM433 196h1v1h-1zM433 361h1v1h-1zM434 350h1v11h-1zM436 367h1v2h-1zM437 407h1v1h-1zM439 376h1v1h-1zM442 185h1v1h-1zM443 186h1v15h-1zM443 385h1v34h-1zM444 201h1v2h-1zM446 188h1v2h-1zM448 193h1v3h-1zM449 352h1v1h-1zM450 399h1v1h-1zM453 382h1v1h-1zM454 366h1v50h-1zM455 416h1v1h-1zM458 198h1v2h-1zM460 402h1v21h-1zM463 199h1v1h-1zM466 413h1v2h-1zM468 369h1v1h-1zM470 192h1v2h-1zM470 457h1v1h-1zM473 377h1v1h-1zM475 368h1v1h-1zM476 186h1v5h-1zM477 465h1v2h-1zM478 444h1v1h-1zM479 193h1v1h-1zM480 195h1v1h-1zM484 411h1v1h-1zM486 188h1v2h-1zM486 419h1v1h-1zM489 186h1v2h-1zM492 190h1v1h-1zM493 375h1v1h-1zM495 384h1v18h-1zM496 194h1v1h-1zM497 191h1v1h-1zM498 181h1v1h-1zM499 188h1v2h-1zM499 410h1v1h-1zM501 191h1v1h-1zM503 191h1v2h-1zM504 184h1v6h-1zM504 415h1v3h-1zM505 183h1v1h-1zM509 188h1v1h-1zM509 414h1v20h-1zM510 391h1v50h-1zM512 187h1v2h-1z"/>
<path fill="#606060" d="M67 266h1v14h-1zM68 324h1v14h-1zM68 345h1v1h-1zM69 342h1v2h-1zM69 345h1v1h-1zM70 329h1v2h-1zM70 333h1v3h-1zM71 316h1v2h-1zM71 320h1v2h-1zM72 303h1v2h-1zM72 307h1v2h-1zM73 290h1v2h-1zM73 294h1v2h-1zM74 276h1v3h-1zM74 281h1v2h-1zM75 263h1v2h-1zM75 268h1v2h-1zM76 250h1v2h-1zM76 254h1v3h-1zM78 245h1v1h-1zM80 251h1v3h-1zM81 262h1v3h-1zM81 267h1v3h-1zM82 278h1v3h-1zM82 284h1v2h-1zM83 295h1v2h-1zM84 292h1v3h-1zM84 297h1v4h-1zM85 276h1v3h-1zM85 282h1v2h-1zM86 261h1v2h-1zM86 266h1v3h-1zM87 245h1v3h-1zM87 250h1v3h-1zM88 230h1v2h-1zM88 235h1v2h-1zM89 214h1v3h-1zM89 219h1v3h-1zM90 205h1v1h-1zM90 209h1v2h-1zM91 212h1v1h-1zM91 214h1v2h-1zM92 219h1v1h-1zM92 221h1v2h-1zM93 226h1v1h-1zM93 228h1v1h-1zM94 233h1v1h-1zM94 235h1v1h-1zM95 237h1v1h-1zM96 231h1v1h-1zM96 234h1v1h-1zM97 225h1v1h-1zM98 223h1v2h-1zM98 227h1v1h-1zM99 232h1v2h-1zM99 235h1v2h-1zM100 241h1v2h-1zM100 244h1v2h-1zM101 250h1v1h-1zM101 253h1v1h-1zM102 259h1v1h-1zM102 262h1v1h-1zM103 267h1v2h-1zM103 270h1v2h-1zM104 276h1v1h-1zM104 279h1v1h-1zM105 282h1v1h-1zM106 271h1v3h-1zM106 276h1v2h-1zM107 257h1v2h-1zM107 262h1v2h-1zM108 249h1v1h-1zM110 249h1v1h-1zM112 240h1v2h-1zM112 243h1v2h-1zM113 230h1v2h-1zM113 234h1v1h-1zM114 220h1v2h-1zM114 224h1v1h-1zM115 218h1v1h-1zM116 222h1v3h-1zM116 227h1v2h-1zM117 235h1v2h-1zM117 239h1v2h-1zM118 248h1v2h-1zM118 252h1v2h-1zM119 260h1v3h-1zM119 265h1v2h-1zM120 273h1v2h-1zM120 277h1v3h-1zM121 272h1v4h-1zM122 249h1v4h-1zM122 257h1v3h-1zM123 225h1v4h-1zM123 233h1v4h-1zM124 226h1v2h-1zM125 235h1v3h-1zM125 241h1v2h-1zM126 251h1v3h-1zM126 257h1v2h-1zM127 267h1v3h-1zM127 273h1v2h-1zM128 283h1v3h-1zM128 289h1v2h-1zM129 289h1v3h-1zM130 268h1v4h-1zM130 276h1v3h-1zM131 246h1v4h-1zM131 253h1v4h-1zM132 234h1v4h-1zM133 237h1v5h-1zM133 247h1v5h-1zM134 267h1v5h-1zM134 277h1v5h-1zM135 297h1v5h-1zM135 307h1v5h-1zM136 327h1v5h-1zM136 338h1v5h-1zM137 351h1v5h-1zM138 333h1v5h-1zM138 343h1v5h-1zM139 303h1v5h-1zM139 313h1v5h-1zM140 272h1v5h-1zM140 282h1v5h-1zM141 242h1v5h-1zM141 252h1v5h-1zM142 231h1v3h-1zM143 236h1v3h-1zM143 241h1v3h-1zM144 252h1v3h-1zM144 258h1v2h-1zM145 269h1v2h-1zM145 274h1v3h-1zM146 277h1v2h-1zM147 262h1v3h-1zM147 268h1v2h-1zM148 246h1v2h-1zM148 251h1v3h-1zM149 229h1v3h-1zM149 235h1v2h-1zM150 225h1v2h-1zM151 230h1v1h-1zM151 233h1v2h-1zM152 240h1v1h-1zM152 243h1v2h-1zM153 250h1v1h-1zM153 253h1v1h-1zM154 259h1v2h-1zM154 263h1v2h-1zM155 253h1v5h-1zM156 236h1v4h-1zM157 237h1v4h-1zM157 244h1v4h-1zM158 257h1v3h-1zM158 270h1v1h-1zM159 249h1v3h-1zM159 256h1v4h-1zM160 236h1v2h-1zM161 236h1v3h-1zM161 242h1v3h-1zM162 254h1v3h-1zM162 259h1v3h-1zM163 271h1v3h-1zM163 277h1v3h-1zM164 279h1v2h-1zM164 287h1v1h-1zM165 268h1v2h-1zM165 272h1v3h-1zM166 255h1v3h-1zM166 260h1v2h-1zM167 251h1v1h-1zM167 258h1v2h-1zM168 267h1v3h-1zM168 272h1v2h-1zM169 277h1v2h-1zM170 261h1v4h-1zM170 269h1v3h-1zM171 240h1v4h-1zM171 247h1v4h-1zM172 219h1v3h-1zM172 226h1v4h-1zM173 192h1v5h-1zM173 208h1v5h-1zM174 190h1v7h-1zM174 206h1v1h-1zM175 219h1v24h-1zM175 254h1v1h-1zM175 281h1v36h-1zM176 279h1v38h-1zM177 268h1v8h-1zM177 292h1v1h-1zM178 256h1v7h-1zM178 273h1v10h-1zM179 247h1v4h-1zM180 237h1v11h-1zM183 260h1v1h-1zM184 249h1v10h-1zM185 245h1v29h-1zM186 244h1v8h-1zM186 268h1v27h-1zM188 225h1v1h-1zM189 229h1v16h-1zM191 236h1v2h-1zM191 247h1v7h-1zM191 258h1v3h-1zM193 278h1v7h-1zM194 261h1v1h-1zM197 244h1v13h-1zM199 256h1v1h-1zM199 258h1v6h-1zM201 245h1v8h-1zM201 295h1v1h-1zM204 241h1v1h-1zM204 258h1v4h-1zM205 258h1v3h-1zM207 254h1v65h-1zM208 276h1v28h-1zM209 241h1v3h-1zM210 248h1v8h-1zM211 248h1v8h-1zM212 226h1v1h-1zM212 249h1v1h-1zM213 211h1v18h-1zM213 366h1v1h-1zM214 211h1v18h-1zM214 230h1v26h-1zM216 219h1v10h-1zM216 277h1v29h-1zM217 210h1v26h-1zM218 263h1v2h-1zM221 222h1v4h-1zM221 258h1v64h-1zM222 218h1v9h-1zM222 229h1v8h-1zM222 283h1v39h-1zM223 236h1v46h-1zM224 225h1v1h-1zM224 259h1v23h-1zM226 236h1v1h-1zM226 259h1v1h-1zM226 277h1v1h-1zM227 228h1v5h-1zM229 204h1v7h-1zM229 266h1v1h-1zM230 204h1v10h-1zM231 336h1v1h-1zM232 293h1v1h-1zM233 285h1v1h-1zM234 299h1v1h-1zM237 234h1v2h-1zM238 232h1v1h-1zM239 232h1v1h-1zM241 252h1v1h-1zM244 220h1v7h-1zM245 218h1v8h-1zM247 219h1v1h-1zM247 275h1v1h-1zM249 222h1v11h-1zM249 332h1v1h-1zM251 211h1v1h-1zM252 214h1v5h-1zM252 296h1v1h-1zM253 286h1v9h-1zM255 256h1v1h-1zM256 231h1v8h-1zM258 215h1v15h-1zM259 212h1v17h-1zM260 257h1v68h-1zM261 218h1v3h-1zM261 290h1v34h-1zM262 267h1v1h-1zM264 203h1v19h-1zM265 202h1v21h-1zM266 322h1v1h-1zM267 224h1v2h-1zM268 224h1v9h-1zM269 325h1v1h-1zM275 220h1v4h-1zM277 201h1v16h-1zM278 206h1v3h-1zM278 210h1v1h-1zM278 307h1v1h-1zM279 314h1v1h-1zM280 285h1v29h-1zM282 281h1v1h-1zM285 213h1v1h-1zM286 220h1v1h-1zM289 223h1v1h-1zM293 289h1v2h-1zM294 225h1v1h-1zM297 314h1v13h-1zM298 211h1v6h-1zM300 345h1v3h-1zM301 213h1v2h-1zM301 334h1v10h-1zM303 342h1v1h-1zM305 285h1v1h-1zM307 290h1v10h-1zM309 212h1v1h-1zM310 271h1v1h-1zM312 206h1v1h-1zM312 294h1v1h-1zM313 213h1v4h-1zM313 356h1v1h-1zM314 214h1v2h-1zM314 330h1v1h-1zM315 330h1v1h-1zM317 208h1v8h-1zM319 219h1v1h-1zM320 207h1v3h-1zM321 193h1v1h-1zM321 301h1v33h-1zM322 328h1v6h-1zM323 206h1v1h-1zM323 284h1v10h-1zM324 329h1v1h-1zM325 207h1v1h-1zM326 296h1v1h-1zM328 208h1v1h-1zM328 295h1v1h-1zM331 207h1v1h-1zM332 203h1v1h-1zM333 203h1v5h-1zM335 310h1v13h-1zM336 323h1v1h-1zM340 298h1v9h-1zM341 302h1v5h-1zM342 372h1v1h-1zM343 212h1v1h-1zM343 310h1v17h-1zM344 327h1v1h-1zM345 315h1v29h-1zM348 208h1v1h-1zM349 197h1v15h-1zM350 302h1v3h-1zM352 323h1v48h-1zM353 324h1v47h-1zM357 195h1v1h-1zM357 299h1v14h-1zM358 196h1v1h-1zM358 313h1v1h-1zM359 319h1v18h-1zM360 323h1v14h-1zM361 211h1v1h-1zM361 323h1v43h-1zM362 204h1v4h-1zM362 304h1v62h-1zM363 204h1v6h-1zM366 350h1v1h-1zM367 209h1v1h-1zM370 303h1v1h-1zM373 416h1v3h-1zM374 417h1v2h-1zM375 314h1v7h-1zM377 208h1v4h-1zM377 378h1v1h-1zM378 203h1v1h-1zM378 375h1v2h-1zM379 352h1v14h-1zM380 204h1v2h-1zM380 356h1v10h-1zM384 205h1v1h-1zM385 321h1v1h-1zM387 327h1v5h-1zM390 331h1v1h-1zM391 207h1v1h-1zM391 338h1v60h-1zM392 337h1v1h-1zM393 388h1v1h-1zM396 196h1v10h-1zM397 187h1v1h-1zM398 325h1v23h-1zM399 201h1v2h-1zM400 194h1v1h-1zM403 204h1v1h-1zM404 198h1v2h-1zM404 342h1v1h-1zM405 200h1v1h-1zM406 343h1v1h-1zM411 200h1v1h-1zM412 198h1v1h-1zM412 350h1v82h-1zM413 195h1v4h-1zM414 199h1v1h-1zM415 199h1v1h-1zM415 327h1v12h-1zM416 192h1v1h-1zM417 211h1v2h-1zM417 465h1v1h-1zM419 190h1v1h-1zM419 371h1v1h-1zM420 206h1v1h-1zM420 339h1v38h-1zM421 196h1v9h-1zM424 440h1v1h-1zM425 437h1v1h-1zM426 203h1v6h-1zM427 200h1v1h-1zM427 376h1v1h-1zM428 195h1v1h-1zM429 195h1v1h-1zM430 358h1v3h-1zM431 199h1v1h-1zM432 199h1v1h-1zM432 357h1v1h-1zM433 357h1v4h-1zM434 194h1v1h-1zM436 193h1v1h-1zM437 200h1v2h-1zM438 195h1v2h-1zM439 368h1v8h-1zM440 195h1v3h-1zM441 350h1v1h-1zM443 384h1v1h-1zM444 203h1v1h-1zM446 351h1v10h-1zM448 196h1v7h-1zM448 373h1v1h-1zM452 345h1v17h-1zM454 192h1v1h-1zM454 365h1v1h-1zM455 198h1v1h-1zM457 197h1v1h-1zM458 358h1v41h-1zM460 196h1v1h-1zM460 401h1v1h-1zM467 194h1v1h-1zM467 384h1v31h-1zM469 371h1v86h-1zM470 368h1v89h-1zM472 372h1v2h-1zM474 193h1v1h-1zM475 186h1v10h-1zM476 191h1v2h-1zM478 197h1v1h-1zM479 356h1v1h-1zM480 377h1v1h-1zM482 191h1v4h-1zM482 423h1v1h-1zM483 191h1v1h-1zM484 195h1v4h-1zM485 186h1v1h-1zM486 190h1v1h-1zM487 190h1v1h-1zM487 410h1v9h-1zM488 186h1v4h-1zM489 188h1v5h-1zM491 193h1v1h-1zM494 194h1v1h-1zM495 379h1v5h-1zM496 195h1v2h-1zM498 417h1v1h-1zM500 381h1v1h-1zM501 192h1v1h-1zM503 415h1v3h-1zM504 190h1v2h-1zM504 414h1v1h-1zM506 190h1v1h-1zM506 455h1v1h-1zM507 420h1v1h-1zM508 415h1v19h-1zM509 189h1v2h-1zM511 414h1v27h-1zM512 388h1v25h-1z"/>
<path fill="#404040" d="M67 259h1v7h-1zM68 338h1v7h-1zM69 344h1v1h-1zM70 331h1v2h-1zM71 318h1v2h-1zM72 305h1v2h-1zM73 292h1v2h-1zM74 279h1v2h-1zM75 265h1v3h-1zM76 252h1v2h-1zM77 244h1v1h-1zM80 248h1v3h-1zM81 265h1v2h-1zM82 281h1v3h-1zM83 297h1v8h-1zM84 295h1v2h-1zM85 279h1v3h-1zM86 263h1v3h-1zM87 248h1v2h-1zM88 232h1v3h-1zM89 217h1v2h-1zM90 208h1v1h-1zM91 213h1v1h-1zM92 220h1v1h-1zM93 227h1v1h-1zM94 234h1v1h-1zM95 238h1v2h-1zM95 241h1v1h-1zM96 232h1v2h-1zM97 221h1v4h-1zM98 225h1v2h-1zM99 234h1v1h-1zM100 243h1v1h-1zM101 251h1v2h-1zM102 260h1v2h-1zM103 269h1v1h-1zM104 277h1v2h-1zM105 283h1v2h-1zM105 287h1v1h-1zM106 274h1v2h-1zM107 259h1v3h-1zM111 249h1v1h-1zM112 242h1v1h-1zM113 232h1v2h-1zM114 222h1v2h-1zM115 216h1v2h-1zM116 225h1v2h-1zM117 237h1v2h-1zM118 250h1v2h-1zM119 263h1v2h-1zM120 275h1v2h-1zM121 276h1v9h-1zM122 253h1v4h-1zM123 229h1v4h-1zM124 217h1v9h-1zM125 238h1v3h-1zM126 254h1v3h-1zM127 270h1v3h-1zM128 286h1v3h-1zM129 292h1v3h-1zM130 272h1v4h-1zM131 250h1v3h-1zM132 223h1v5h-1zM132 230h1v4h-1zM133 242h1v5h-1zM134 272h1v5h-1zM135 302h1v5h-1zM136 332h1v6h-1zM137 356h1v5h-1zM138 338h1v5h-1zM139 308h1v5h-1zM140 277h1v5h-1zM141 247h1v5h-1zM142 227h1v4h-1zM143 239h1v2h-1zM144 255h1v3h-1zM145 271h1v3h-1zM146 279h1v2h-1zM147 265h1v3h-1zM148 248h1v3h-1zM149 232h1v3h-1zM150 220h1v1h-1zM150 223h1v2h-1zM151 231h1v2h-1zM152 241h1v2h-1zM153 251h1v2h-1zM154 261h1v2h-1zM155 258h1v11h-1zM156 232h1v4h-1zM157 241h1v3h-1zM158 260h1v4h-1zM158 265h1v5h-1zM159 252h1v4h-1zM160 232h1v4h-1zM161 239h1v3h-1zM162 257h1v2h-1zM163 274h1v3h-1zM164 281h1v2h-1zM164 285h1v2h-1zM165 270h1v2h-1zM166 258h1v2h-1zM167 252h1v6h-1zM168 270h1v2h-1zM169 279h1v3h-1zM170 265h1v4h-1zM171 244h1v3h-1zM172 222h1v4h-1zM173 197h1v11h-1zM174 345h1v1h-1zM175 243h1v11h-1zM175 255h1v26h-1zM176 251h1v1h-1zM176 260h1v19h-1zM177 276h1v14h-1zM178 263h1v10h-1zM179 238h1v9h-1zM180 248h1v16h-1zM180 290h1v5h-1zM182 254h1v5h-1zM182 261h1v9h-1zM183 258h1v2h-1zM184 244h1v5h-1zM184 259h1v1h-1zM185 244h1v1h-1zM186 295h1v31h-1zM186 335h1v39h-1zM187 237h1v7h-1zM188 226h1v11h-1zM189 226h1v3h-1zM189 245h1v15h-1zM190 226h1v9h-1zM191 254h1v4h-1zM192 227h1v1h-1zM194 242h1v19h-1zM195 261h1v9h-1zM197 241h1v3h-1zM198 250h1v30h-1zM199 264h1v2h-1zM200 286h1v1h-1zM201 253h1v42h-1zM202 202h1v36h-1zM202 245h1v5h-1zM203 272h1v12h-1zM204 242h1v16h-1zM206 237h1v3h-1zM206 253h1v13h-1zM207 248h1v1h-1zM207 253h1v1h-1zM207 319h1v6h-1zM208 261h1v15h-1zM209 222h1v19h-1zM210 225h1v1h-1zM210 241h1v7h-1zM212 227h1v10h-1zM213 229h1v17h-1zM213 253h1v113h-1zM214 256h1v1h-1zM215 306h1v108h-1zM216 273h1v4h-1zM217 236h1v1h-1zM218 237h1v4h-1zM218 259h1v4h-1zM219 221h1v15h-1zM219 240h1v1h-1zM219 264h1v1h-1zM220 222h1v32h-1zM220 258h1v19h-1zM220 284h1v1h-1zM221 226h1v1h-1zM222 227h1v2h-1zM222 237h1v14h-1zM222 252h1v31h-1zM223 192h1v4h-1zM223 206h1v1h-1zM223 229h1v7h-1zM224 258h1v1h-1zM225 259h1v2h-1zM226 250h1v9h-1zM226 260h1v2h-1zM228 260h1v13h-1zM230 214h1v1h-1zM231 215h1v12h-1zM232 227h1v1h-1zM234 233h1v1h-1zM235 233h1v1h-1zM235 351h1v1h-1zM236 241h1v1h-1zM236 296h1v6h-1zM237 303h1v12h-1zM238 233h1v1h-1zM239 233h1v5h-1zM239 328h1v1h-1zM241 250h1v1h-1zM242 223h1v11h-1zM243 256h1v17h-1zM244 227h1v1h-1zM245 226h1v1h-1zM246 224h1v2h-1zM248 275h1v1h-1zM249 294h1v38h-1zM251 212h1v16h-1zM251 297h1v1h-1zM252 219h1v18h-1zM252 238h1v1h-1zM252 280h1v16h-1zM253 220h1v6h-1zM253 285h1v1h-1zM253 295h1v1h-1zM254 289h1v7h-1zM256 223h1v8h-1zM256 239h1v1h-1zM256 278h1v1h-1zM257 215h1v1h-1zM257 276h1v39h-1zM258 230h1v1h-1zM258 294h1v1h-1zM259 229h1v2h-1zM260 217h1v1h-1zM261 289h1v1h-1zM262 226h1v1h-1zM262 263h1v4h-1zM264 222h1v8h-1zM264 260h1v15h-1zM267 323h1v7h-1zM270 222h1v18h-1zM270 315h1v1h-1zM271 232h1v13h-1zM271 303h1v13h-1zM273 213h1v6h-1zM274 291h1v1h-1zM275 224h1v4h-1zM276 220h1v3h-1zM277 217h1v1h-1zM277 307h1v28h-1zM281 213h1v11h-1zM282 263h1v18h-1zM283 288h1v42h-1zM286 276h1v44h-1zM288 270h1v44h-1zM289 314h1v52h-1zM290 278h1v43h-1zM291 220h1v1h-1zM291 304h1v17h-1zM292 213h1v1h-1zM293 223h1v1h-1zM293 283h1v6h-1zM295 212h1v1h-1zM296 207h1v5h-1zM296 295h1v6h-1zM297 211h1v1h-1zM298 217h1v3h-1zM298 422h1v1h-1zM299 220h1v1h-1zM300 215h1v5h-1zM300 344h1v1h-1zM301 215h1v9h-1zM301 316h1v18h-1zM302 333h1v21h-1zM304 273h1v11h-1zM305 284h1v1h-1zM307 280h1v10h-1zM308 348h1v29h-1zM309 213h1v5h-1zM309 311h1v37h-1zM311 213h1v1h-1zM311 307h1v1h-1zM313 217h1v1h-1zM313 345h1v11h-1zM314 323h1v7h-1zM315 208h1v1h-1zM316 321h1v68h-1zM317 316h1v4h-1zM318 311h1v57h-1zM320 210h1v1h-1zM321 194h1v12h-1zM323 283h1v1h-1zM324 324h1v5h-1zM326 201h1v1h-1zM326 276h1v20h-1zM327 286h1v69h-1zM328 209h1v1h-1zM329 206h1v2h-1zM329 282h1v1h-1zM330 293h1v9h-1zM331 293h1v3h-1zM332 302h1v1h-1zM333 208h1v1h-1zM335 213h1v1h-1zM335 293h1v17h-1zM336 214h1v1h-1zM336 319h1v4h-1zM341 215h1v1h-1zM341 301h1v1h-1zM342 204h1v8h-1zM343 309h1v1h-1zM344 317h1v10h-1zM345 304h1v11h-1zM346 309h1v36h-1zM347 209h1v2h-1zM347 367h1v8h-1zM348 209h1v4h-1zM348 312h1v15h-1zM349 212h1v1h-1zM350 301h1v1h-1zM351 305h1v10h-1zM352 301h1v22h-1zM355 212h1v8h-1zM355 325h1v1h-1zM356 319h1v12h-1zM357 196h1v10h-1zM357 298h1v1h-1zM359 208h1v1h-1zM360 310h1v13h-1zM362 208h1v1h-1zM362 301h1v3h-1zM363 210h1v1h-1zM363 304h1v3h-1zM365 200h1v7h-1zM365 333h1v1h-1zM366 209h1v1h-1zM366 335h1v15h-1zM367 210h1v1h-1zM369 322h1v32h-1zM370 197h1v1h-1zM370 301h1v2h-1zM372 323h1v10h-1zM373 189h1v1h-1zM373 372h1v44h-1zM374 416h1v1h-1zM375 199h1v1h-1zM376 208h1v3h-1zM376 314h1v17h-1zM377 212h1v1h-1zM378 204h1v3h-1zM380 355h1v1h-1zM381 207h1v4h-1zM381 326h1v20h-1zM382 347h1v32h-1zM384 206h1v1h-1zM385 205h1v2h-1zM386 199h1v8h-1zM388 207h1v1h-1zM388 332h1v58h-1zM389 330h1v1h-1zM390 200h1v1h-1zM390 329h1v2h-1zM391 208h1v4h-1zM391 337h1v1h-1zM394 327h1v14h-1zM396 206h1v1h-1zM397 188h1v7h-1zM398 200h1v3h-1zM400 351h1v32h-1zM401 191h1v10h-1zM403 205h1v3h-1zM404 338h1v4h-1zM405 201h1v6h-1zM407 201h1v1h-1zM408 201h1v1h-1zM408 378h1v1h-1zM410 206h1v1h-1zM412 339h1v11h-1zM413 199h1v2h-1zM413 338h1v11h-1zM414 200h1v1h-1zM415 326h1v1h-1zM416 363h1v72h-1zM417 435h1v30h-1zM419 362h1v9h-1zM420 207h1v1h-1zM420 338h1v1h-1zM421 205h1v1h-1zM421 338h1v1h-1zM422 196h1v5h-1zM422 341h1v1h-1zM423 372h1v75h-1zM424 197h1v1h-1zM425 196h1v3h-1zM425 346h1v91h-1zM426 379h1v1h-1zM427 357h1v19h-1zM428 196h1v1h-1zM428 352h1v24h-1zM429 196h1v1h-1zM430 195h1v4h-1zM433 197h1v1h-1zM433 346h1v11h-1zM435 369h1v40h-1zM436 363h1v4h-1zM437 373h1v34h-1zM439 367h1v1h-1zM440 198h1v1h-1zM441 198h1v1h-1zM442 186h1v5h-1zM443 377h1v7h-1zM445 358h1v5h-1zM446 190h1v1h-1zM447 374h1v6h-1zM448 203h1v1h-1zM448 352h1v21h-1zM449 193h1v6h-1zM449 351h1v1h-1zM450 198h1v2h-1zM451 382h1v15h-1zM452 192h1v1h-1zM452 342h1v3h-1zM454 356h1v9h-1zM455 199h1v2h-1zM455 401h1v15h-1zM456 198h1v1h-1zM457 410h1v1h-1zM458 357h1v1h-1zM459 196h1v1h-1zM459 364h1v59h-1zM462 187h1v1h-1zM462 358h1v13h-1zM463 374h1v1h-1zM464 396h1v1h-1zM465 199h1v2h-1zM466 191h1v8h-1zM466 373h1v40h-1zM469 186h1v1h-1zM470 367h1v1h-1zM471 187h1v5h-1zM472 193h1v4h-1zM473 193h1v4h-1zM474 194h1v4h-1zM474 377h1v8h-1zM475 196h1v1h-1zM476 193h1v1h-1zM476 453h1v14h-1zM477 464h1v1h-1zM481 182h1v7h-1zM483 192h1v3h-1zM483 418h1v21h-1zM484 199h1v1h-1zM485 187h1v1h-1zM486 191h1v1h-1zM486 418h1v1h-1zM487 365h1v45h-1zM488 416h1v1h-1zM489 193h1v1h-1zM489 417h1v50h-1zM490 383h1v8h-1zM491 194h1v1h-1zM492 191h1v1h-1zM493 369h1v6h-1zM494 378h1v1h-1zM495 362h1v17h-1zM496 398h1v4h-1zM498 401h1v16h-1zM499 190h1v1h-1zM499 385h1v25h-1zM500 184h1v1h-1zM500 376h1v5h-1zM501 374h1v1h-1zM502 181h1v1h-1zM503 414h1v1h-1zM504 192h1v1h-1zM504 396h1v18h-1zM505 184h1v7h-1zM505 394h1v1h-1zM506 421h1v34h-1zM508 414h1v1h-1zM509 191h1v2h-1zM511 413h1v1h-1zM512 189h1v1h-1z"/>
<path fill="#202020" d="M90 206h1v2h-1zM95 240h1v1h-1zM105 285h1v2h-1zM115 213h1v3h-1zM129 295h1v5h-1zM132 228h1v2h-1zM137 361h1v7h-1zM142 222h1v5h-1zM146 281h1v5h-1zM150 221h1v2h-1zM156 225h1v7h-1zM158 264h1v1h-1zM160 227h1v5h-1zM164 283h1v2h-1zM169 282h1v4h-1zM174 207h1v138h-1zM176 252h1v8h-1zM177 290h1v2h-1zM179 221h1v17h-1zM180 264h1v26h-1zM181 214h1v47h-1zM182 228h1v26h-1zM182 259h1v2h-1zM184 235h1v9h-1zM185 237h1v1h-1zM185 239h1v5h-1zM186 326h1v9h-1zM187 244h1v7h-1zM187 256h1v1h-1zM188 237h1v29h-1zM189 260h1v13h-1zM190 235h1v4h-1zM190 244h1v1h-1zM192 228h1v42h-1zM193 222h1v1h-1zM193 235h1v43h-1zM194 224h1v18h-1zM195 223h1v1h-1zM195 229h1v32h-1zM196 220h1v23h-1zM197 233h1v8h-1zM198 226h1v24h-1zM199 266h1v12h-1zM200 254h1v13h-1zM201 224h1v1h-1zM201 236h1v9h-1zM202 238h1v7h-1zM202 250h1v5h-1zM203 232h1v18h-1zM203 251h1v21h-1zM204 262h1v27h-1zM205 232h1v9h-1zM205 250h1v8h-1zM206 240h1v13h-1zM206 266h1v2h-1zM208 243h1v1h-1zM208 260h1v1h-1zM209 244h1v48h-1zM210 236h1v5h-1zM211 221h1v27h-1zM212 237h1v9h-1zM213 246h1v7h-1zM214 257h1v11h-1zM214 297h1v1h-1zM215 219h1v87h-1zM216 229h1v1h-1zM216 251h1v1h-1zM216 265h1v8h-1zM217 237h1v2h-1zM217 270h1v7h-1zM218 241h1v1h-1zM219 236h1v4h-1zM219 241h1v23h-1zM220 254h1v4h-1zM220 277h1v7h-1zM220 285h1v56h-1zM221 227h1v9h-1zM221 246h1v1h-1zM221 257h1v1h-1zM222 251h1v1h-1zM223 196h1v10h-1zM223 207h1v11h-1zM223 224h1v1h-1zM223 228h1v1h-1zM224 226h1v3h-1zM224 243h1v15h-1zM225 230h1v29h-1zM225 261h1v52h-1zM226 249h1v1h-1zM226 262h1v15h-1zM227 233h1v50h-1zM228 216h1v1h-1zM228 239h1v21h-1zM229 211h1v55h-1zM230 215h1v1h-1zM230 251h1v68h-1zM231 227h1v10h-1zM231 279h1v57h-1zM232 272h1v21h-1zM233 227h1v1h-1zM233 254h1v31h-1zM234 234h1v32h-1zM234 285h1v14h-1zM235 236h1v115h-1zM236 242h1v9h-1zM236 294h1v2h-1zM237 241h1v1h-1zM237 296h1v7h-1zM238 234h1v27h-1zM238 263h1v2h-1zM239 238h1v90h-1zM240 220h1v73h-1zM241 225h1v25h-1zM241 251h1v1h-1zM242 234h1v1h-1zM242 253h1v6h-1zM242 273h1v13h-1zM243 220h1v8h-1zM243 230h1v26h-1zM244 228h1v7h-1zM244 236h1v1h-1zM244 256h1v52h-1zM245 227h1v1h-1zM245 262h1v23h-1zM246 226h1v3h-1zM246 279h1v1h-1zM247 220h1v6h-1zM247 254h1v21h-1zM248 217h1v5h-1zM249 293h1v1h-1zM250 206h1v40h-1zM250 300h1v5h-1zM251 228h1v47h-1zM251 292h1v1h-1zM252 237h1v1h-1zM252 239h1v10h-1zM252 279h1v1h-1zM254 211h1v21h-1zM255 232h1v1h-1zM255 240h1v1h-1zM255 248h1v8h-1zM256 240h1v1h-1zM256 277h1v1h-1zM257 216h1v1h-1zM257 232h1v5h-1zM257 246h1v30h-1zM258 260h1v34h-1zM259 294h1v45h-1zM260 232h1v25h-1zM261 221h1v6h-1zM261 232h1v4h-1zM261 241h1v1h-1zM261 265h1v24h-1zM262 262h1v1h-1zM263 222h1v1h-1zM263 267h1v135h-1zM264 259h1v1h-1zM265 223h1v2h-1zM265 267h1v21h-1zM266 220h1v3h-1zM266 267h1v55h-1zM267 226h1v1h-1zM267 309h1v14h-1zM268 233h1v1h-1zM268 268h1v43h-1zM269 222h1v2h-1zM269 310h1v15h-1zM270 240h1v6h-1zM271 245h1v1h-1zM272 232h1v1h-1zM272 288h1v16h-1zM273 219h1v12h-1zM273 280h1v8h-1zM274 219h1v3h-1zM274 290h1v1h-1zM275 228h1v1h-1zM275 293h1v53h-1zM276 223h1v1h-1zM276 290h1v3h-1zM277 285h1v22h-1zM278 211h1v1h-1zM278 260h1v47h-1zM279 221h1v7h-1zM279 313h1v1h-1zM280 218h1v1h-1zM281 224h1v3h-1zM281 264h1v6h-1zM282 205h1v22h-1zM283 193h1v12h-1zM283 211h1v15h-1zM284 298h1v6h-1zM285 214h1v4h-1zM285 298h1v4h-1zM285 303h1v33h-1zM286 268h1v8h-1zM287 216h1v1h-1zM287 266h1v1h-1zM287 268h1v8h-1zM288 215h1v1h-1zM288 267h1v3h-1zM289 270h1v44h-1zM290 218h1v5h-1zM290 274h1v4h-1zM291 274h1v30h-1zM292 291h1v13h-1zM293 224h1v9h-1zM293 280h1v3h-1zM294 226h1v8h-1zM295 213h1v13h-1zM295 260h1v10h-1zM295 276h1v69h-1zM296 212h1v1h-1zM296 270h1v25h-1zM297 212h1v5h-1zM297 313h1v1h-1zM298 220h1v4h-1zM298 327h1v95h-1zM299 221h1v2h-1zM299 349h1v1h-1zM300 220h1v1h-1zM300 323h1v21h-1zM301 224h1v1h-1zM302 222h1v3h-1zM302 300h1v33h-1zM303 219h1v1h-1zM303 268h1v74h-1zM304 211h1v6h-1zM304 265h1v8h-1zM305 218h1v13h-1zM305 265h1v19h-1zM306 222h1v1h-1zM306 301h1v16h-1zM307 217h1v2h-1zM308 207h1v13h-1zM308 290h1v58h-1zM309 218h1v5h-1zM309 310h1v1h-1zM310 203h1v2h-1zM310 269h1v2h-1zM311 214h1v1h-1zM311 291h1v16h-1zM312 207h1v6h-1zM312 293h1v1h-1zM313 218h1v7h-1zM313 334h1v11h-1zM314 216h1v1h-1zM314 282h1v41h-1zM315 209h1v5h-1zM315 329h1v1h-1zM316 206h1v2h-1zM316 316h1v5h-1zM318 219h1v1h-1zM318 299h1v12h-1zM319 311h1v9h-1zM320 292h1v1h-1zM321 206h1v1h-1zM321 286h1v15h-1zM322 220h1v3h-1zM323 207h1v3h-1zM323 282h1v1h-1zM324 221h1v2h-1zM324 323h1v1h-1zM325 208h1v7h-1zM327 209h1v1h-1zM327 276h1v10h-1zM328 210h1v4h-1zM328 286h1v9h-1zM329 208h1v1h-1zM329 280h1v2h-1zM330 209h1v1h-1zM330 283h1v10h-1zM332 204h1v1h-1zM332 296h1v6h-1zM333 209h1v7h-1zM333 305h1v38h-1zM334 309h1v22h-1zM335 292h1v1h-1zM336 215h1v1h-1zM336 318h1v1h-1zM337 215h1v10h-1zM337 312h1v36h-1zM338 213h1v2h-1zM338 327h1v1h-1zM339 205h1v6h-1zM339 290h1v54h-1zM340 290h1v8h-1zM341 298h1v3h-1zM342 212h1v1h-1zM342 332h1v40h-1zM343 213h1v2h-1zM343 308h1v1h-1zM344 212h1v1h-1zM345 214h1v1h-1zM345 290h1v14h-1zM346 216h1v3h-1zM347 366h1v1h-1zM348 213h1v5h-1zM348 304h1v8h-1zM349 213h1v3h-1zM349 309h1v5h-1zM350 211h1v6h-1zM351 204h1v3h-1zM351 304h1v1h-1zM352 299h1v2h-1zM353 209h1v1h-1zM353 323h1v1h-1zM354 204h1v2h-1zM355 220h1v1h-1zM356 193h1v18h-1zM356 318h1v1h-1zM357 291h1v7h-1zM358 197h1v13h-1zM359 209h1v1h-1zM359 318h1v1h-1zM360 205h1v6h-1zM360 309h1v1h-1zM361 212h1v2h-1zM361 310h1v13h-1zM363 211h1v5h-1zM363 301h1v3h-1zM364 206h1v4h-1zM364 299h1v33h-1zM365 207h1v3h-1zM366 210h1v2h-1zM366 324h1v11h-1zM367 324h1v11h-1zM368 202h1v6h-1zM368 323h1v21h-1zM369 307h1v15h-1zM370 198h1v8h-1zM371 198h1v1h-1zM371 315h1v1h-1zM372 316h1v7h-1zM373 190h1v8h-1zM374 350h1v66h-1zM375 200h1v8h-1zM375 313h1v1h-1zM376 211h1v7h-1zM376 306h1v8h-1zM377 360h1v18h-1zM378 207h1v6h-1zM378 374h1v1h-1zM379 204h1v3h-1zM379 344h1v8h-1zM381 211h1v1h-1zM381 316h1v10h-1zM382 199h1v1h-1zM382 340h1v7h-1zM383 204h1v2h-1zM383 311h1v5h-1zM384 207h1v1h-1zM384 328h1v5h-1zM386 207h1v7h-1zM386 320h1v5h-1zM387 206h1v1h-1zM387 311h1v16h-1zM388 331h1v1h-1zM389 204h1v3h-1zM389 329h1v1h-1zM390 201h1v8h-1zM390 328h1v1h-1zM391 327h1v10h-1zM392 201h1v1h-1zM392 319h1v18h-1zM393 213h1v1h-1zM393 370h1v18h-1zM394 195h1v13h-1zM394 326h1v1h-1zM395 198h1v9h-1zM395 328h1v66h-1zM396 207h1v1h-1zM396 348h1v31h-1zM397 195h1v8h-1zM397 349h1v2h-1zM398 203h1v5h-1zM399 203h1v1h-1zM399 368h1v1h-1zM400 195h1v6h-1zM400 350h1v1h-1zM401 201h1v3h-1zM401 372h1v3h-1zM402 196h1v8h-1zM402 406h1v6h-1zM403 342h1v23h-1zM404 200h1v4h-1zM404 337h1v1h-1zM405 207h1v1h-1zM405 343h1v38h-1zM406 205h1v2h-1zM407 202h1v1h-1zM407 327h1v29h-1zM408 202h1v7h-1zM408 370h1v8h-1zM409 201h1v4h-1zM409 369h1v10h-1zM410 207h1v1h-1zM411 201h1v2h-1zM411 338h1v30h-1zM412 199h1v3h-1zM412 338h1v1h-1zM413 201h1v1h-1zM413 331h1v7h-1zM414 359h1v42h-1zM415 321h1v5h-1zM416 193h1v6h-1zM417 213h1v1h-1zM417 366h1v69h-1zM418 197h1v9h-1zM418 371h1v3h-1zM419 191h1v13h-1zM419 357h1v5h-1zM420 208h1v5h-1zM420 328h1v10h-1zM421 206h1v1h-1zM422 201h1v2h-1zM423 196h1v1h-1zM424 198h1v1h-1zM424 349h1v91h-1zM425 199h1v1h-1zM425 345h1v1h-1zM426 209h1v1h-1zM426 353h1v26h-1zM427 201h1v1h-1zM428 197h1v3h-1zM428 351h1v1h-1zM429 197h1v3h-1zM429 402h1v65h-1zM430 357h1v1h-1zM431 200h1v5h-1zM431 353h1v13h-1zM432 352h1v5h-1zM433 198h1v2h-1zM433 345h1v1h-1zM435 368h1v1h-1zM436 194h1v4h-1zM436 356h1v7h-1zM437 202h1v6h-1zM438 377h1v18h-1zM439 195h1v4h-1zM440 199h1v1h-1zM440 351h1v15h-1zM442 191h1v1h-1zM442 343h1v4h-1zM443 201h1v1h-1zM443 376h1v1h-1zM444 204h1v1h-1zM444 420h1v7h-1zM445 187h1v1h-1zM445 349h1v9h-1zM446 191h1v6h-1zM447 192h1v5h-1zM447 361h1v13h-1zM448 351h1v1h-1zM450 200h1v2h-1zM450 382h1v17h-1zM451 345h1v37h-1zM452 193h1v4h-1zM453 192h1v4h-1zM453 364h1v18h-1zM454 193h1v3h-1zM454 355h1v1h-1zM455 201h1v7h-1zM456 402h1v2h-1zM457 198h1v2h-1zM457 399h1v11h-1zM458 200h1v1h-1zM458 354h1v3h-1zM459 197h1v1h-1zM459 357h1v7h-1zM461 192h1v5h-1zM461 375h1v17h-1zM462 188h1v4h-1zM462 357h1v1h-1zM463 200h1v2h-1zM463 371h1v3h-1zM464 195h1v2h-1zM464 390h1v6h-1zM465 413h1v15h-1zM466 199h1v1h-1zM466 372h1v1h-1zM468 352h1v17h-1zM469 187h1v7h-1zM469 370h1v1h-1zM470 194h1v2h-1zM470 357h1v10h-1zM471 192h1v1h-1zM471 367h1v3h-1zM472 197h1v3h-1zM472 371h1v1h-1zM473 197h1v1h-1zM474 198h1v1h-1zM474 371h1v6h-1zM475 197h1v1h-1zM475 367h1v1h-1zM476 194h1v4h-1zM476 387h1v66h-1zM477 191h1v2h-1zM477 453h1v11h-1zM478 198h1v1h-1zM478 393h1v51h-1zM479 194h1v1h-1zM479 350h1v6h-1zM480 196h1v1h-1zM480 369h1v8h-1zM481 189h1v1h-1zM481 389h1v25h-1zM482 195h1v1h-1zM483 195h1v3h-1zM483 411h1v7h-1zM484 200h1v1h-1zM484 391h1v20h-1zM485 188h1v1h-1zM485 418h1v11h-1zM486 192h1v1h-1zM486 409h1v9h-1zM487 191h1v1h-1zM488 190h1v4h-1zM488 406h1v10h-1zM489 383h1v34h-1zM490 188h1v5h-1zM491 195h1v2h-1zM491 383h1v8h-1zM493 189h1v2h-1zM493 368h1v1h-1zM494 195h1v1h-1zM494 375h1v3h-1zM495 192h1v3h-1zM495 361h1v1h-1zM496 197h1v1h-1zM496 384h1v14h-1zM497 192h1v3h-1zM497 440h1v24h-1zM498 182h1v11h-1zM498 394h1v7h-1zM499 191h1v3h-1zM499 384h1v1h-1zM500 185h1v3h-1zM500 368h1v8h-1zM501 193h1v1h-1zM502 182h1v8h-1zM502 367h1v1h-1zM503 193h1v1h-1zM504 193h1v2h-1zM504 381h1v15h-1zM505 376h1v18h-1zM506 191h1v1h-1zM506 396h1v25h-1zM507 181h1v7h-1zM507 402h1v18h-1zM508 185h1v1h-1zM508 413h1v1h-1zM509 193h1v1h-1zM509 384h1v30h-1zM512 383h1v5h-1z"/>
<path fill="#000000" d="M185 238h1v1h-1zM187 251h1v5h-1zM190 239h1v5h-1zM193 223h1v12h-1zM195 224h1v5h-1zM200 267h1v19h-1zM201 225h1v11h-1zM202 255h1v8h-1zM203 250h1v1h-1zM205 241h1v9h-1zM207 249h1v4h-1zM208 244h1v16h-1zM210 226h1v10h-1zM212 246h1v3h-1zM214 268h1v29h-1zM216 230h1v21h-1zM216 252h1v13h-1zM217 239h1v31h-1zM218 242h1v17h-1zM221 236h1v10h-1zM221 247h1v10h-1zM223 218h1v6h-1zM223 225h1v3h-1zM224 229h1v14h-1zM226 237h1v12h-1zM228 217h1v22h-1zM230 216h1v35h-1zM231 237h1v42h-1zM232 228h1v44h-1zM233 228h1v26h-1zM234 266h1v19h-1zM235 234h1v2h-1zM236 251h1v43h-1zM237 242h1v54h-1zM238 261h1v2h-1zM242 235h1v18h-1zM242 259h1v14h-1zM243 228h1v2h-1zM244 235h1v1h-1zM244 237h1v19h-1zM245 228h1v34h-1zM246 229h1v50h-1zM247 226h1v28h-1zM248 222h1v53h-1zM249 233h1v60h-1zM250 246h1v54h-1zM251 275h1v17h-1zM251 293h1v4h-1zM252 249h1v30h-1zM253 226h1v59h-1zM254 232h1v57h-1zM255 233h1v7h-1zM255 241h1v7h-1zM256 241h1v36h-1zM257 217h1v15h-1zM257 237h1v9h-1zM258 231h1v29h-1zM259 231h1v63h-1zM260 218h1v14h-1zM261 227h1v5h-1zM261 236h1v5h-1zM261 242h1v23h-1zM262 227h1v35h-1zM263 223h1v44h-1zM264 230h1v29h-1zM265 225h1v42h-1zM266 223h1v44h-1zM267 227h1v82h-1zM268 234h1v34h-1zM269 224h1v86h-1zM270 246h1v69h-1zM271 246h1v57h-1zM272 233h1v55h-1zM273 231h1v49h-1zM274 222h1v68h-1zM275 229h1v64h-1zM276 224h1v66h-1zM277 218h1v67h-1zM278 212h1v48h-1zM279 228h1v85h-1zM280 219h1v66h-1zM281 227h1v37h-1zM282 227h1v36h-1zM283 205h1v6h-1zM283 226h1v62h-1zM284 228h1v70h-1zM285 218h1v80h-1zM285 302h1v1h-1zM286 221h1v47h-1zM287 217h1v49h-1zM287 267h1v1h-1zM288 216h1v51h-1zM289 224h1v46h-1zM290 223h1v51h-1zM291 221h1v53h-1zM292 214h1v77h-1zM293 233h1v47h-1zM294 234h1v60h-1zM295 226h1v34h-1zM295 270h1v6h-1zM296 213h1v57h-1zM297 217h1v96h-1zM298 224h1v103h-1zM299 223h1v126h-1zM300 221h1v102h-1zM301 225h1v91h-1zM302 225h1v75h-1zM303 220h1v48h-1zM304 217h1v48h-1zM305 231h1v34h-1zM306 223h1v78h-1zM307 219h1v61h-1zM308 220h1v70h-1zM309 223h1v87h-1zM310 205h1v64h-1zM311 215h1v76h-1zM312 213h1v80h-1zM313 225h1v109h-1zM314 217h1v65h-1zM315 214h1v115h-1zM316 208h1v108h-1zM317 216h1v100h-1zM318 220h1v79h-1zM319 220h1v91h-1zM320 211h1v81h-1zM321 207h1v79h-1zM322 223h1v105h-1zM323 210h1v72h-1zM324 223h1v100h-1zM325 215h1v83h-1zM326 202h1v74h-1zM327 210h1v66h-1zM328 214h1v72h-1zM329 209h1v71h-1zM330 210h1v73h-1zM331 208h1v85h-1zM332 205h1v91h-1zM333 216h1v89h-1zM334 208h1v101h-1zM335 214h1v78h-1zM336 216h1v102h-1zM337 225h1v87h-1zM338 215h1v112h-1zM339 211h1v79h-1zM340 211h1v79h-1zM341 216h1v82h-1zM342 213h1v119h-1zM343 215h1v93h-1zM344 213h1v104h-1zM345 215h1v75h-1zM346 219h1v90h-1zM347 211h1v155h-1zM348 218h1v86h-1zM349 216h1v93h-1zM350 217h1v84h-1zM351 207h1v97h-1zM352 211h1v88h-1zM353 210h1v113h-1zM354 206h1v112h-1zM355 221h1v104h-1zM356 211h1v107h-1zM357 206h1v85h-1zM358 210h1v103h-1zM359 210h1v108h-1zM360 211h1v98h-1zM361 214h1v96h-1zM362 209h1v92h-1zM363 216h1v85h-1zM364 210h1v89h-1zM365 210h1v123h-1zM366 212h1v112h-1zM367 211h1v113h-1zM368 208h1v115h-1zM369 208h1v99h-1zM370 206h1v95h-1zM371 199h1v116h-1zM372 205h1v111h-1zM373 198h1v174h-1zM374 205h1v145h-1zM375 208h1v105h-1zM376 218h1v88h-1zM377 213h1v147h-1zM378 213h1v161h-1zM379 207h1v137h-1zM380 206h1v149h-1zM381 212h1v104h-1zM382 200h1v140h-1zM383 206h1v105h-1zM384 208h1v120h-1zM385 207h1v114h-1zM386 214h1v106h-1zM387 207h1v104h-1zM388 208h1v123h-1zM389 207h1v122h-1zM390 209h1v119h-1zM391 212h1v115h-1zM392 202h1v117h-1zM393 214h1v156h-1zM394 208h1v118h-1zM395 207h1v121h-1zM396 208h1v140h-1zM397 203h1v146h-1zM398 208h1v117h-1zM399 204h1v164h-1zM400 201h1v149h-1zM401 204h1v168h-1zM402 204h1v202h-1zM403 208h1v134h-1zM404 204h1v133h-1zM405 208h1v135h-1zM406 207h1v136h-1zM407 203h1v124h-1zM408 209h1v161h-1zM409 205h1v164h-1zM410 208h1v138h-1zM411 203h1v135h-1zM412 202h1v136h-1zM413 202h1v129h-1zM414 201h1v158h-1zM415 200h1v121h-1zM416 199h1v164h-1zM417 214h1v152h-1zM418 206h1v165h-1zM419 204h1v153h-1zM420 213h1v115h-1zM421 207h1v131h-1zM422 203h1v138h-1zM423 197h1v175h-1zM424 199h1v150h-1zM425 200h1v145h-1zM426 210h1v143h-1zM427 202h1v155h-1zM428 200h1v151h-1zM429 200h1v202h-1zM430 199h1v158h-1zM431 205h1v148h-1zM432 200h1v152h-1zM433 200h1v145h-1zM434 195h1v155h-1zM435 194h1v174h-1zM436 198h1v158h-1zM437 208h1v165h-1zM438 197h1v180h-1zM439 199h1v168h-1zM440 200h1v151h-1zM441 199h1v151h-1zM442 192h1v151h-1zM443 202h1v174h-1zM444 205h1v215h-1zM445 188h1v161h-1zM446 197h1v154h-1zM447 197h1v164h-1zM448 204h1v147h-1zM449 199h1v152h-1zM450 202h1v180h-1zM451 198h1v147h-1zM452 197h1v145h-1zM453 196h1v168h-1zM454 196h1v159h-1zM455 208h1v193h-1zM456 199h1v203h-1zM457 200h1v199h-1zM458 201h1v153h-1zM459 198h1v159h-1zM460 197h1v204h-1zM461 197h1v178h-1zM462 192h1v165h-1zM463 202h1v169h-1zM464 197h1v193h-1zM465 201h1v212h-1zM466 200h1v172h-1zM467 195h1v189h-1zM468 197h1v155h-1zM469 194h1v176h-1zM470 196h1v161h-1zM471 193h1v174h-1zM472 200h1v171h-1zM473 198h1v179h-1zM474 199h1v172h-1zM475 198h1v169h-1zM476 198h1v189h-1zM477 193h1v260h-1zM478 199h1v194h-1zM479 195h1v155h-1zM480 197h1v172h-1zM481 190h1v199h-1zM482 196h1v227h-1zM483 198h1v213h-1zM484 201h1v190h-1zM485 189h1v229h-1zM486 193h1v216h-1zM487 192h1v173h-1zM488 194h1v212h-1zM489 194h1v189h-1zM490 193h1v190h-1zM491 197h1v186h-1zM492 192h1v188h-1zM493 191h1v177h-1zM494 196h1v179h-1zM495 195h1v166h-1zM496 198h1v186h-1zM497 195h1v245h-1zM498 193h1v201h-1zM499 194h1v190h-1zM500 188h1v180h-1zM501 194h1v180h-1zM502 190h1v177h-1zM503 194h1v220h-1zM504 195h1v186h-1zM505 191h1v185h-1zM506 192h1v204h-1zM507 188h1v214h-1zM508 186h1v227h-1zM509 194h1v190h-1zM510 188h1v203h-1zM511 185h1v228h-1zM512 190h1v193h-1z"/>
 <rect x="65.5" y="35.5" width="449" height="433" fill="none" stroke="#ffffff" stroke-width="1"/>
 <rect x="66.5" y="36.5" width="447" height="431" fill="none" stroke="#4a4a4a" stroke-width="1"/>
</svg>
<!-- x labels -->
<div class="xl" style="left:46.6px;top:472px">10</div>
<div class="xl" style="left:87.4px;top:472px">20</div>
<div class="xl" style="left:141.3px;top:472px">50</div>
<div class="xl" style="left:182.1px;top:472px">100</div>
<div class="xl" style="left:222.9px;top:472px">200</div>
<div class="xl" style="left:276.8px;top:472px">500</div>
<div class="xl" style="left:317.5px;top:472px">1K</div>
<div class="xl" style="left:358.3px;top:472px">2K</div>
<div class="xl" style="left:412.2px;top:472px">5K</div>
<div class="xl" style="left:453.0px;top:472px">10K</div>
<div class="xl" style="left:493.8px;top:472px">20K</div>
<div class="a" style="left:261px;top:485px;font-size:7.7px;font-weight:bold;line-height:10px;color:#000">Frequency (Hz)</div>
<!-- bottom controls -->
<div class="a" style="left:4px;top:482px;width:51px;height:18px;background:#fbfbfb;border:1px solid #d3d3d3;border-radius:3.5px"></div>
<div class="t" style="left:8px;top:486px">Advanced</div>
<div class="inp" style="left:66px;top:482px;width:52px;height:19px"></div>
<div class="t" style="left:71px;top:485px">10</div>
<div class="inp" style="left:461px;top:482px;width:52px;height:19px"></div>
<div class="t" style="left:478px;top:485px;width:30px;text-align:right">20000</div>
<!-- right panel -->
<div class="grp" style="left:517px;top:43px;width:86px;height:80px"></div>
<div class="gt" style="left:523px;top:37.5px">Overall Control</div>
<div class="combo" style="left:524px;top:52px;width:72px;height:17px"><svg class="a" style="left:60px;top:6px" width="8" height="5" viewBox="0 0 8 5" shape-rendering="auto"><path d="M0.5 0.8 L4 4.2 L7.5 0.8" fill="none" stroke="#606060" stroke-width="1"/></svg></div>
<div class="t" style="left:526px;top:55.5px">Freq</div>
<div class="cb on" style="left:523px;top:76px"><svg class="a" style="left:0;top:0" width="11" height="11" viewBox="0 0 11 11" shape-rendering="auto"><path d="M2.6 5.6 L4.6 7.6 L8.6 3.4" fill="none" stroke="#e6eef8" stroke-width="0.9"/></svg></div><div class="t" style="left:537px;top:76px">Update</div>
<div class="cb on" style="left:523px;top:103px"><svg class="a" style="left:0;top:0" width="11" height="11" viewBox="0 0 11 11" shape-rendering="auto"><path d="M2.6 5.6 L4.6 7.6 L8.6 3.4" fill="none" stroke="#e6eef8" stroke-width="0.9"/></svg></div><div class="t" style="left:537px;top:103px;letter-spacing:-0.65px">Show Grid</div>

<div class="grp" style="left:517px;top:138px;width:86px;height:53px"></div>
<div class="gt" style="left:523px;top:134px">Y Axis</div>
<div class="combo" style="left:524px;top:147px;width:72px;height:17px"><svg class="a" style="left:60px;top:6px" width="8" height="5" viewBox="0 0 8 5" shape-rendering="auto"><path d="M0.5 0.8 L4 4.2 L7.5 0.8" fill="none" stroke="#606060" stroke-width="1"/></svg></div>
<div class="t" style="left:526px;top:151px">db20</div>
<div class="cb off" style="left:523px;top:170px"></div><div class="t" style="left:537px;top:170px">Auto Range</div>

<div class="grp" style="left:517px;top:206px;width:86px;height:56px"></div>
<div class="gt" style="left:523px;top:202px">X Axis</div>
<div class="combo" style="left:524px;top:215px;width:72px;height:17px"><svg class="a" style="left:60px;top:6px" width="8" height="5" viewBox="0 0 8 5" shape-rendering="auto"><path d="M0.5 0.8 L4 4.2 L7.5 0.8" fill="none" stroke="#606060" stroke-width="1"/></svg></div>
<div class="t" style="left:526px;top:219px">Logarithmic</div>
<div class="cb off" style="left:523px;top:239px"></div><div class="t" style="left:537px;top:239px">Auto Range</div>

<div class="a" style="left:516px;top:271px;width:19px;height:2px;background:#000;border-radius:1px"></div>
<div class="cb on" style="left:536px;top:268px"><svg class="a" style="left:0;top:0" width="11" height="11" viewBox="0 0 11 11" shape-rendering="auto"><path d="M2.6 5.6 L4.6 7.6 L8.6 3.4" fill="none" stroke="#e6eef8" stroke-width="0.9"/></svg></div><div class="t" style="left:551px;top:268px">rand</div>
</body></html>
